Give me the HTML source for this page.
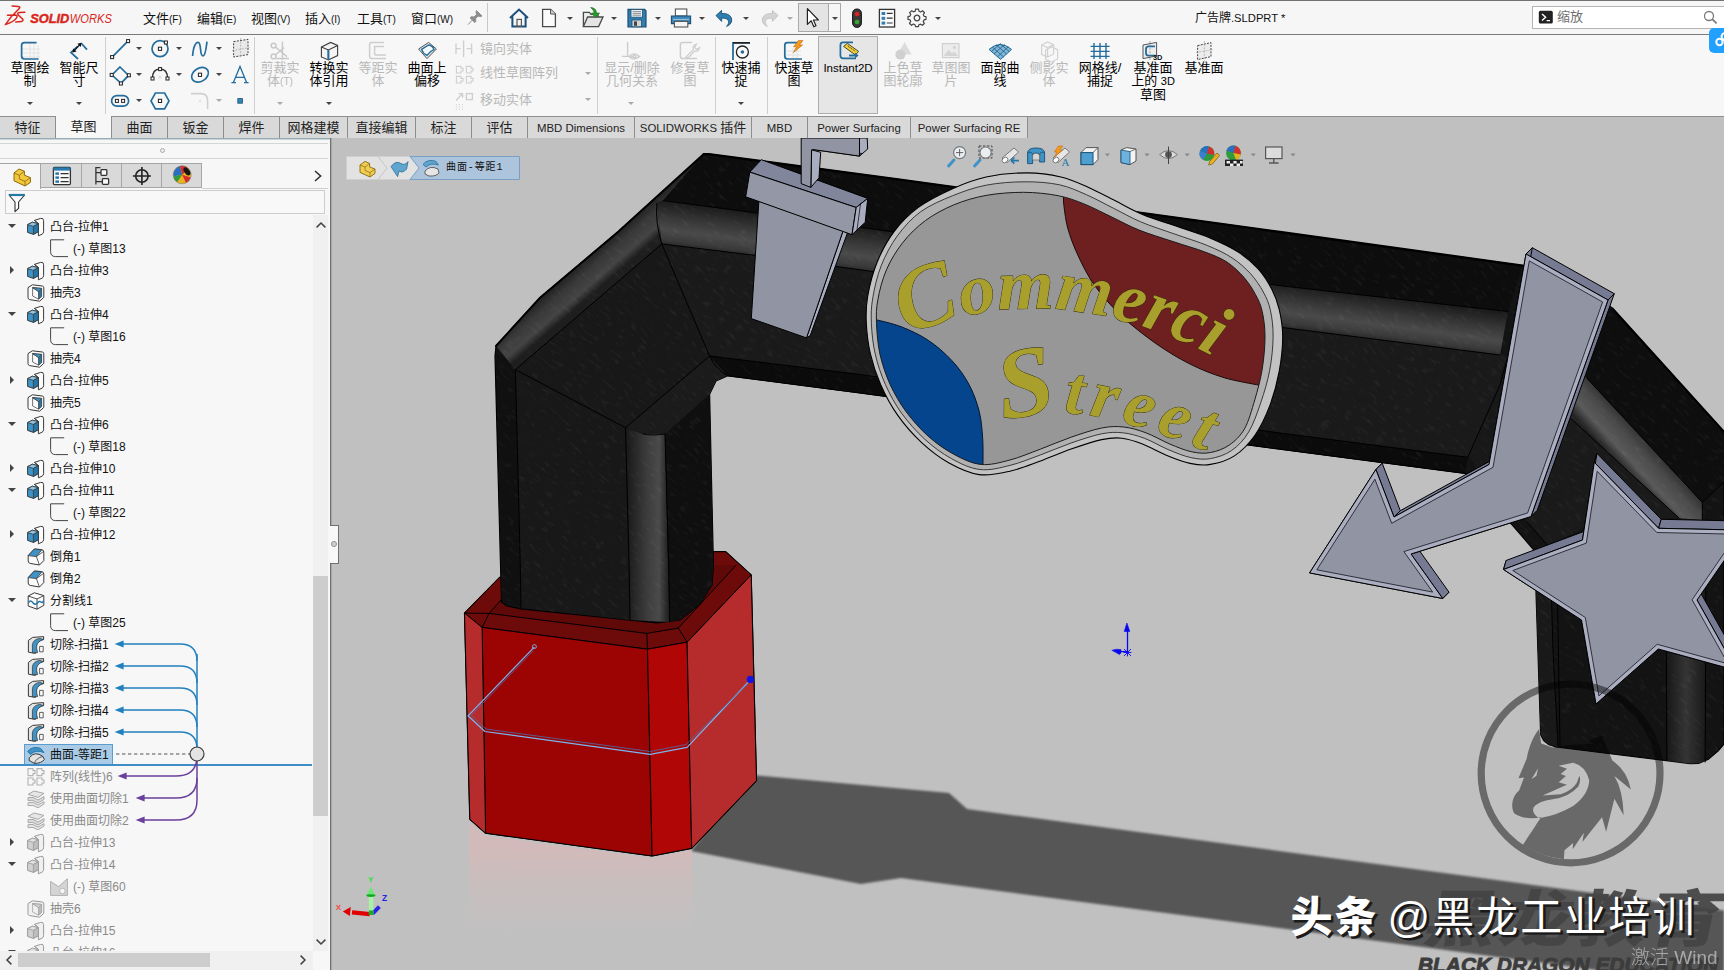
<!DOCTYPE html>
<html lang="zh-CN">
<head>
<meta charset="utf-8">
<title>SOLIDWORKS - 广告牌.SLDPRT</title>
<style>
html,body{margin:0;padding:0;}
body{width:1724px;height:970px;overflow:hidden;position:relative;background:#f6f6f6;font-family:"Liberation Sans","Noto Sans CJK SC",sans-serif;font-size:13px;color:#000;}
.abs{position:absolute;}
#title{position:absolute;left:0;top:0;width:1724px;height:35px;background:#f6f6f6;border-top:1px solid #727272;border-bottom:1px solid #7a7a7a;box-sizing:border-box;}
#ribbon{position:absolute;left:0;top:35px;width:1724px;height:81px;background:#f7f7f7;}
#tabs{position:absolute;left:0;top:116px;width:1724px;height:22px;background:#c0c0c0;border-top:1px solid #8e8e8e;box-sizing:border-box;}
.tab{position:absolute;top:0;height:22px;box-sizing:border-box;background:#d9d9d9;border-right:1px solid #8e8e8e;border-bottom:1px solid #8e8e8e;text-align:center;line-height:22px;font-size:13px;color:#222;white-space:nowrap;}
.tab.on{background:#f7f7f7;border-bottom:none;top:-1px;height:23px;border-left:1px solid #8e8e8e;}
.menu{position:absolute;top:7px;font-size:13px;white-space:nowrap;color:#111;}
.menu small{font-size:10px;}
.big{position:absolute;top:61px;width:70px;text-align:center;font-size:13px;line-height:13px;color:#000;}
.big.dis{color:#b8b8b8;}
.sm{position:absolute;font-size:13px;color:#b8b8b8;white-space:nowrap;line-height:14px;}
.vsep{position:absolute;top:37px;height:77px;width:1px;background:#cfcfcf;}
.dd{position:absolute;width:0;height:0;border-left:3px solid transparent;border-right:3px solid transparent;border-top:3px solid #444;}
.dd.g{border-top-color:#aaa;}
#left{position:absolute;left:0;top:138px;width:330px;height:832px;background:#f7f7f7;overflow:hidden;}
#view{position:absolute;left:332px;top:138px;width:1392px;height:832px;background:#c0c0c0;overflow:hidden;}
.row{position:absolute;left:50px;height:22px;line-height:22px;font-size:12px;white-space:nowrap;color:#111;}
.row.c{left:73px;}
.row.g{color:#8a8a8a;}
</style>
</head>
<body>
<div id="title">
<!-- logo -->
<svg class="abs" style="left:4px;top:4px" width="112" height="26" viewBox="0 0 112 26">
 <g fill="none" stroke="#d9261c" stroke-width="1.5" stroke-linecap="round" stroke-linejoin="round">
  <path d="M8.1 1 L14.1 1.4 Q16.4 1.8 15.5 3.2 L10 9 M3.5 10.3 L11.5 9.9 Q13.8 10.1 12.6 12.8 Q10 16.6 1.3 19.6 L8.4 10.3"/>
  <path d="M20.9 7.3 L15.2 7.6 Q13 8 14.1 9.9 L18.6 14 Q19.8 15.8 17.5 16.6 L11.8 17.1"/>
 </g>
 <text x="26.2" y="17.7" font-family="'Liberation Sans',sans-serif" font-size="12.6" font-style="italic" font-weight="bold" fill="#d9261c" stroke="#d9261c" stroke-width=".45" textLength="39" lengthAdjust="spacingAndGlyphs">SOLID</text>
 <text x="65.8" y="17.7" font-family="'Liberation Sans',sans-serif" font-size="12.6" font-style="italic" fill="#d9261c" textLength="42" lengthAdjust="spacingAndGlyphs">WORKS</text>
</svg>
<div class="menu" style="left:143px">文件<small>(F)</small></div>
<div class="menu" style="left:197px">编辑<small>(E)</small></div>
<div class="menu" style="left:251px">视图<small>(V)</small></div>
<div class="menu" style="left:305px">插入<small>(I)</small></div>
<div class="menu" style="left:357px">工具<small>(T)</small></div>
<div class="menu" style="left:411px">窗口<small>(W)</small></div>
<!-- pin -->
<svg class="abs" style="left:466px;top:8px" width="18" height="18" viewBox="0 0 18 18"><path d="M10.5 1.5 L16 7 L14.6 7.6 L12 7 L9.6 9.6 L9.8 12.6 L8.6 13.4 L4.2 9 L5 7.8 L8 8 L10.6 5.6 L10 3 Z M6.2 11.2 L2 15.6" fill="#8d8d8d" stroke="#8d8d8d" stroke-width="1"/></svg>
<div class="abs" style="left:487px;top:2px;width:1px;height:29px;background:#c8c8c8"></div>
<!-- home -->
<svg class="abs" style="left:508px;top:6px" width="22" height="22" viewBox="0 0 22 22"><path d="M2 11 L11 2.6 L20 11 M4.4 9.6 V19.4 H17.6 V9.6" fill="none" stroke="#1d4f7c" stroke-width="2"/><rect x="9" y="12.4" width="4.4" height="7" fill="none" stroke="#555" stroke-width="1.2"/></svg>
<!-- new -->
<svg class="abs" style="left:539px;top:5px" width="20" height="24" viewBox="0 0 20 24"><path d="M3.6 3.4 H11.6 L16.4 8 V20.6 H3.6 Z" fill="#fbfbfb" stroke="#4a4a4a" stroke-width="1.3"/><path d="M11.6 3.4 V8 H16.4" fill="#ddd" stroke="#4a4a4a" stroke-width="1"/></svg>
<div class="dd" style="left:567px;top:16px"></div>
<!-- open -->
<svg class="abs" style="left:581px;top:4px" width="24" height="26" viewBox="0 0 24 26"><path d="M2.4 21.6 V7.4 H8.4 L10 9.4 H17 V12" fill="#ececec" stroke="#4a4a4a" stroke-width="1.3"/><path d="M2.4 21.6 L6.6 12 H22 L17.6 21.6 Z" fill="#e4e4e4" stroke="#4a4a4a" stroke-width="1.3"/><path d="M9.6 2.6 C13 2.6 15.4 4.6 15.6 8 H18.6 L14.4 12.6 L10.4 8 H13 C12.8 5.6 11.6 4.2 9.6 2.6 Z" fill="#2a9a2a" stroke="#1c6e1c" stroke-width=".6"/></svg>
<div class="dd" style="left:611px;top:16px"></div>
<!-- save -->
<svg class="abs" style="left:626px;top:6px" width="22" height="22" viewBox="0 0 22 22"><path d="M2 2.4 H18.6 L20 3.8 V19.8 H2 Z" fill="#2f7eb0" stroke="#1b4f74" stroke-width="1.2"/><rect x="5" y="2.6" width="11.6" height="7.6" fill="#e9eef2" stroke="#1b4f74" stroke-width=".8"/><path d="M6.6 4.6 H15 M6.6 6.4 H15 M6.6 8.2 H15" stroke="#777" stroke-width=".8"/><rect x="6" y="13" width="9.6" height="6.8" fill="#d5d5d5" stroke="#1b4f74" stroke-width=".8"/><rect x="8" y="14.4" width="3" height="4.4" fill="#444"/></svg>
<div class="dd" style="left:655px;top:16px"></div>
<!-- print -->
<svg class="abs" style="left:669px;top:5px" width="24" height="24" viewBox="0 0 24 24"><rect x="6.4" y="3" width="11.4" height="7" fill="#fff" stroke="#555" stroke-width="1.1"/><path d="M2.4 10 H21.6 V17.6 H2.4 Z" fill="#3b86b8" stroke="#1b4f74" stroke-width="1.1"/><rect x="5.4" y="15.4" width="13.4" height="5.6" fill="#f4f4f4" stroke="#555" stroke-width="1.1"/><path d="M4 13.4 H20" stroke="#9fc7e2" stroke-width="1"/></svg>
<div class="dd" style="left:699px;top:16px"></div>
<!-- undo -->
<svg class="abs" style="left:714px;top:6px" width="22" height="22" viewBox="0 0 22 22"><path d="M2 8.6 L7.6 3.4 V6.6 C13.6 6 18.4 9 17.6 14 C17.2 16.6 15.4 18.4 12.6 19.4 C15 16.6 15.2 14 13.4 12.4 C12 11.2 10 11 7.6 11.2 V14.4 Z" fill="#2f7eb0" stroke="#1b4f74" stroke-width=".9"/></svg>
<div class="dd" style="left:743px;top:16px"></div>
<!-- redo disabled -->
<svg class="abs" style="left:758px;top:6px" width="22" height="22" viewBox="0 0 22 22"><path d="M20 8.6 L14.4 3.4 V6.6 C8.4 6 3.6 9 4.4 14 C4.8 16.6 6.6 18.4 9.4 19.4 C7 16.6 6.8 14 8.6 12.4 C10 11.2 12 11 14.4 11.2 V14.4 Z" fill="#d4d4d4" stroke="#c2c2c2" stroke-width=".9"/></svg>
<div class="dd g" style="left:787px;top:16px"></div>
<!-- select box -->
<div class="abs" style="left:798px;top:2px;width:43px;height:29px;border:1px solid #a9a9a9;box-sizing:border-box;background:#f6f6f6"><div class="abs" style="left:0;top:0;width:29px;height:27px;background:#e4e4e4;border-right:1px solid #a9a9a9"></div></div>
<svg class="abs" style="left:804px;top:6px" width="18" height="22" viewBox="0 0 18 22"><path d="M3.4 1.6 V17.4 L7.2 13.8 L9.8 19.8 L12 18.8 L9.4 13 H14.4 Z" fill="#fff" stroke="#222" stroke-width="1.2" stroke-linejoin="round"/></svg>
<div class="dd" style="left:832px;top:16px"></div>
<!-- traffic light -->
<svg class="abs" style="left:849px;top:6px" width="16" height="22" viewBox="0 0 16 22"><rect x="3.6" y="2" width="8.8" height="18.4" rx="4.2" fill="#3a3a3a" stroke="#111" stroke-width="1"/><circle cx="8" cy="7" r="2.3" fill="#e02020"/><circle cx="8" cy="15" r="2.3" fill="#2faa2f"/></svg>
<!-- options list -->
<svg class="abs" style="left:877px;top:6px" width="20" height="22" viewBox="0 0 20 22"><rect x="2.4" y="2.4" width="15.2" height="17.6" fill="#fafafa" stroke="#333" stroke-width="1.3"/><g fill="#2f7eb0"><rect x="4.6" y="5" width="3.6" height="3"/><rect x="4.6" y="9.8" width="3.6" height="3"/><rect x="4.6" y="14.6" width="3.6" height="3"/></g><path d="M9.8 6.4 H15.6 M9.8 11.2 H15.6 M9.8 16 H15.6" stroke="#333" stroke-width="1.2"/></svg>
<!-- gear -->
<svg class="abs" style="left:906px;top:6px" width="22" height="22" viewBox="0 0 22 22"><g transform="translate(11 11)" fill="none" stroke="#444" stroke-width="1.3" stroke-linejoin="round"><path d="M-1.6 -8.6 H1.6 L2.2 -6.2 L4 -5.4 L6 -6.8 L8.2 -4.6 L6.8 -2.6 L7.6 -0.8 L9.8 -0.4 V2.6 L7.6 3.2 L6.8 5 L8 7 L5.8 9 L3.8 7.8 L2 8.4 L1.6 10.4 H-1.6 L-2.2 8.4 L-4 7.6 L-6 9 L-8.2 6.8 L-6.8 4.8 L-7.6 3 L-9.8 2.6 V-0.4 L-7.6 -1 L-6.8 -2.8 L-8 -4.8 L-5.8 -6.8 L-3.8 -5.6 L-2 -6.2 Z" transform="translate(0 -1) scale(.92)"/><circle cx="0" cy="0" r="2.8"/></g></svg>
<div class="dd" style="left:935px;top:16px"></div>
<!-- doc title -->
<div class="abs" style="left:1195px;top:7px;font-size:12px;white-space:nowrap;color:#111">广告牌<span style="font-size:11.2px">.SLDPRT *</span></div>
<!-- search -->
<div class="abs" style="left:1532px;top:5px;width:200px;height:23px;border:1px solid #b4b4b4;box-sizing:border-box;background:#fff"></div>
<svg class="abs" style="left:1538px;top:9px" width="16" height="15" viewBox="0 0 16 15"><rect x=".8" y=".8" width="14" height="12.8" rx="1.6" fill="#222"/><path d="M4 4 L7.6 7.2 L4 10.4 M8.6 10.6 H12" fill="none" stroke="#fff" stroke-width="1.4"/></svg>
<div class="abs" style="left:1557px;top:5px;font-size:13px;color:#707070">缩放</div>
<svg class="abs" style="left:1702px;top:8px" width="18" height="18" viewBox="0 0 18 18"><circle cx="7" cy="7" r="4.5" fill="none" stroke="#7a7a7a" stroke-width="1.3"/><path d="M10.2 10.2 L14.6 14.4" stroke="#7a7a7a" stroke-width="1.8"/></svg>
</div>
<!-- blue floating button -->
<div class="abs" style="left:1709px;top:28px;width:20px;height:25px;border-radius:5px;background:#22a0ff;z-index:5"></div>
<svg class="abs" style="left:1711px;top:31px;z-index:6" width="14" height="20" viewBox="0 0 14 20"><circle cx="8.5" cy="11" r="3.2" fill="none" stroke="#fff" stroke-width="2"/><circle cx="14" cy="5.6" r="3.4" fill="none" stroke="#fff" stroke-width="2"/></svg>

<div id="ribbon"></div>
<div class="vsep" style="left:105px"></div>
<div class="vsep" style="left:254px"></div>
<div class="vsep" style="left:597px"></div>
<div class="vsep" style="left:715px"></div>
<div class="vsep" style="left:767px"></div>
<!-- Instant2D pressed button -->
<div class="abs" style="left:818px;top:36px;width:60px;height:78px;box-sizing:border-box;border:1px solid #adadad;background:#e6e6e6"></div>

<div class="big" style="left:-5px">草图绘<br>制</div>
<div class="big" style="left:44px">智能尺<br>寸</div>
<div class="big dis" style="left:245px">剪裁实<br>体<span style="font-size:10px">(T)</span></div>
<div class="big" style="left:294px">转换实<br>体引用</div>
<div class="big dis" style="left:343px">等距实<br>体</div>
<div class="big" style="left:392px">曲面上<br>偏移</div>
<div class="big dis" style="left:597px">显示/删除<br>几何关系</div>
<div class="big dis" style="left:655px">修复草<br>图</div>
<div class="big" style="left:706px">快速捕<br>捉</div>
<div class="big" style="left:759px">快速草<br>图</div>
<div class="big" style="left:813px;font-size:11.5px;top:62px">Instant2D</div>
<div class="big dis" style="left:868px">上色草<br>图轮廓</div>
<div class="big dis" style="left:916px">草图图<br>片</div>
<div class="big" style="left:965px">面部曲<br>线</div>
<div class="big dis" style="left:1014px">侧影实<br>体</div>
<div class="big" style="left:1065px">网格线/<br>捕捉</div>
<div class="big" style="left:1118px">基准面<br>上的 <span style="font-size:11px">3D</span><br>草图</div>
<div class="big" style="left:1169px">基准面</div>

<div class="dd" style="left:27px;top:102px"></div>
<div class="dd" style="left:76px;top:102px"></div>
<div class="dd g" style="left:277px;top:102px"></div>
<div class="dd" style="left:326px;top:102px"></div>
<div class="dd g" style="left:628px;top:102px"></div>
<div class="dd" style="left:738px;top:102px"></div>

<!-- big icons -->
<svg class="abs" style="left:0;top:36px" width="1230" height="26" viewBox="0 36 1230 26">
 <!-- 草图绘制 -->
 <g><path d="M30 43 V59 M34 43 V59 M38 45 V59 M22 49 H40 M22 53 H40 M22 57 H40" stroke="#e3e3e3" stroke-width="1"/><path d="M36.6 42.6 H24.4 Q21.6 42.6 21.6 45.4 V56 Q21.6 59 24.6 59 H38.6" fill="none" stroke="#236c9b" stroke-width="1.7"/></g>
 <!-- 智能尺寸 -->
 <g><path d="M81 43 L87 49.6 M77.6 46.4 L71 52.6 L78 59" fill="none" stroke="#236c9b" stroke-width="1.8"/><path d="M73.6 51.4 L80.4 44" stroke="#111" stroke-width="1.2"/><path d="M72.6 52.6 L73.2 48.4 L76.6 51.6 Z M81.4 42.8 L80.8 47 L77.4 43.8 Z" fill="#111"/></g>
 <!-- 剪裁 disabled -->
 <g fill="none" stroke="#c9c9c9" stroke-width="1.5"><circle cx="273.6" cy="45.6" r="2.4"/><circle cx="273.6" cy="56.4" r="2.4"/><path d="M275.4 47 L287 56.6 M275.4 55 L284 47.6 M282.4 41.6 V60 M276 58.6 H289"/></g>
 <!-- 转换实体引用 -->
 <g><path d="M321.4 47 L330.6 42.4 L337.6 45.4 V55.6 L328.4 60 L321.4 57 Z" fill="#f4f4f4" stroke="#3c3c3c" stroke-width="1.1"/><path d="M321.4 47 L328.4 50 L337.6 45.4 M328.4 50 V60" fill="none" stroke="#3c3c3c" stroke-width="1.1"/><path d="M328.4 50 V60" stroke="#236c9b" stroke-width="2"/></g>
 <!-- 等距 disabled -->
 <g fill="none" stroke="#cdcdcd" stroke-width="1.5"><path d="M384 42.6 H371.4 Q369.6 42.6 369.6 44.4 V56 Q369.6 58.6 372 58.6 H386"/><path d="M384 46.4 H374.6 V54 Q374.6 55 375.6 55 H386"/></g>
 <!-- 曲面上偏移 -->
 <g><path d="M418.6 49 L428.6 42.4 L436.4 49 L427 58.6 Z" fill="#e6e6e6" stroke="#555" stroke-width="1"/><path d="M421.6 49.4 L428.6 45 Q433 46 434 49.6 Q430 51 427 55.4 Q423 53.6 421.6 49.4 Z" fill="#f6fbff" stroke="#236c9b" stroke-width="1.4"/></g>
 <!-- 显示/删除几何关系 disabled -->
 <g fill="none" stroke="#cdcdcd" stroke-width="1.4"><path d="M627.6 42 V56.4 M622 56.4 H633"/><path d="M629 56.4 Q634 51.4 639.6 56.4 Q634 61 629 56.4 Z"/><circle cx="634.4" cy="56.4" r="1.3"/></g>
 <!-- 修复草图 disabled -->
 <g fill="none" stroke="#cdcdcd" stroke-width="1.5"><path d="M692 42.6 H682.4 Q680.4 42.6 680.4 44.6 V56 Q680.4 58.6 683 58.6 H697"/><path d="M686 57 L693.4 49.6 Q692 45.6 696.4 44 L694.6 47.4 L696.6 49.4 L699.6 47.6 Q698.6 52 694.8 51 L687.6 58.4 Z" stroke-width="1.2"/></g>
 <!-- 快速捕捉 -->
 <g fill="none"><path d="M733 60 V42.8 H750" stroke="#236c9b" stroke-width="1.8"/><path d="M733 42.8 H750" stroke="#222" stroke-width="1.6"/><circle cx="742.4" cy="52" r="6" stroke="#222" stroke-width="1.3" fill="#fafafa"/><circle cx="742.4" cy="52" r="1.8" fill="#236c9b"/></g>
 <!-- 快速草图 -->
 <g fill="none"><path d="M793 48 V59 M797 50 V59 M786 51 H801 M786 55 H801" stroke="#e0e0e0"/><path d="M798 42.6 H787.4 Q784.8 42.6 784.8 45.2 V56 Q784.8 59 787.6 59 H802" stroke="#236c9b" stroke-width="1.7"/><path d="M798.4 40.6 L803 40.6 L799.4 45 L802.6 45 L793.4 52.6 L796.6 46.8 L793.6 46.8 Z" fill="#f39a1a" stroke="#c2600a" stroke-width=".6"/></g>
 <!-- Instant2D -->
 <g fill="none"><path d="M853 42.4 H843 Q840.4 42.4 840.4 45 V55.6 Q840.4 58.4 843.2 58.4 H856" stroke="#236c9b" stroke-width="1.7"/><path d="M843.6 46.4 L847.4 43.4 L858.6 51.4 L855.4 55 Z" fill="#f3d02c" stroke="#333" stroke-width=".9"/><path d="M848 45.6 L849.4 47.6 M850.6 47.4 L852 49.4 M853.2 49.4 L854.6 51.2" stroke="#333" stroke-width=".8"/><path d="M849 54.6 H855 V52.6 L858.6 55.6 L855 58.6 V56.6 H849 Z" fill="#236c9b"/></g>
 <!-- 上色草图轮廓 disabled -->
 <g><path d="M904.6 42 L911.6 54.6 H897.6 Z" fill="#dcdcdc"/><circle cx="900.4" cy="54.6" r="5" fill="#d0d0d0"/></g>
 <!-- 草图图片 disabled -->
 <g><rect x="942.4" y="43.6" width="16.6" height="14" fill="#ececec" stroke="#d0d0d0" stroke-width="1.2"/><path d="M943.6 56 L948.6 50 L952 53.4 L954.4 51.4 L958 56 Z" fill="#d4d4d4"/><circle cx="954.4" cy="47.4" r="1.6" fill="#d4d4d4"/></g>
 <!-- 面部曲线 -->
 <g><path d="M989 49.4 Q1000 39.6 1011.6 49.4 L1000.6 59.4 Z" fill="#7fb6d6" stroke="#236c9b" stroke-width="1"/><path d="M992.4 47 L1003.6 57 M996 44.6 L1006.6 54 M1000 43.6 L1009.4 51.6 M1008.4 46.6 L997.6 56.6 M1004.6 44.4 L994 54 M1000.4 43.6 L991.4 51.6" stroke="#1d5d86" stroke-width=".8" fill="none"/></g>
 <!-- 侧影实体 disabled -->
 <g fill="none" stroke="#d2d2d2" stroke-width="1.2"><path d="M1041.6 45 L1047.6 42 L1053.6 44.6 V54 L1047.6 57 L1041.6 54.4 Z M1041.6 45 L1047.6 47.6 L1053.6 44.6 M1047.6 47.6 V57"/><path d="M1045.6 50 L1051.6 47 L1057.6 49.6 V59 L1051.6 62 L1045.6 59.4 Z"/></g>
 <!-- 网格线/捕捉 -->
 <g stroke="#236c9b" stroke-width="1.4"><path d="M1094 43 V59 M1100 43 V59 M1106 43 V59 M1090.6 46.4 H1109.6 M1090.6 51.4 H1109.6 M1090.6 56.4 H1109.6"/></g>
 <!-- 基准面上的3D草图 -->
 <g fill="none"><path d="M1143 45 L1156.6 42.4 V56 L1143 58.6 Z" fill="#ededed" stroke="#555" stroke-width="1"/><path d="M1155 46.4 H1148.6 Q1146 46.4 1146 49 V53 Q1146 55.6 1148.6 55.6 H1155.6" stroke="#236c9b" stroke-width="1.8"/><path d="M1150 41 V60" stroke="#777" stroke-width=".6" stroke-dasharray="2 1.4"/><text x="1153" y="59.6" font-family="'Liberation Sans',sans-serif" font-size="7.4" font-weight="bold" fill="#111" stroke="none">3D</text></g>
 <!-- 基准面 -->
 <g fill="#ececec" stroke="#444" stroke-width="1" stroke-dasharray="2 1.2"><path d="M1197.6 45.6 L1211 42.6 V56.6 L1197.6 59.6 Z"/><path d="M1204.4 41 V61 M1196 52.6 L1212.6 49.6" stroke="#999" stroke-width=".6"/></g>
</svg>

<!-- small sketch tool grid -->
<svg class="abs" style="left:108px;top:36px" width="146" height="80" viewBox="108 36 146 80">
 <g fill="none" stroke="#236c9b" stroke-width="1.7">
  <path d="M112.6 56.6 L127.4 41.6"/>
  <circle cx="160" cy="48.7" r="8"/>
  <path d="M192.6 56 C193.4 45 196.4 41.6 198.6 42.6 C201.6 44 199.4 56 203 56 C205.6 56 206.4 46 207 41.6"/>
  <path d="M120 67 L128.6 75.4 L121 83.4 L112 75 Z"/>
  <ellipse cx="200" cy="74.8" rx="9" ry="6.6" transform="rotate(-32 200 74.8)"/>
  <rect x="111.6" y="95.6" width="17" height="10.6" rx="5.3"/>
  <path d="M155.4 93 H164.6 L169 100.9 L164.6 108.8 H155.4 L151 100.9 Z"/>
  <path d="M233.4 82.6 L240 66.4 L246.6 82.6 M235.8 77.4 H244.2 M231.4 82.6 H236 M244 82.6 H248.6" stroke-width="1.3"/>
 </g>
 <path d="M152.4 78.6 Q152.4 69 160 69 Q167.6 69 167.6 78.6" fill="none" stroke="#333" stroke-width="1.4"/>
 <g fill="#fff" stroke="#222" stroke-width="1">
  <rect x="110.6" y="55.6" width="3" height="3"/><rect x="126.6" y="39.6" width="3" height="3"/>
  <rect x="158.4" y="47.2" width="3.2" height="3.2"/><rect x="164.4" y="41" width="3" height="3"/>
  <rect x="110.2" y="73.4" width="3" height="3"/><rect x="127.4" y="73.8" width="3" height="3"/><rect x="119.4" y="82" width="3" height="3"/>
  <rect x="151" y="77" width="3" height="3"/><rect x="166" y="77" width="3" height="3"/><rect x="158.6" y="67.6" width="3" height="3"/>
  <rect x="198.4" y="73.2" width="3.2" height="3.2"/>
  <rect x="115.4" y="99.4" width="3" height="3"/><rect x="121.6" y="99.4" width="3" height="3"/>
  <rect x="158.4" y="99.3" width="3.2" height="3.2"/>
 </g>
 <path d="M158.4 75.6 L161.6 78.8 M161.6 75.6 L158.4 78.8" stroke="#ccc" stroke-width=".8"/>
 <path d="M233.6 41.6 L248 39.4 V54.6 L233.6 57 Z" fill="#e9e9e9" stroke="#444" stroke-width="1" stroke-dasharray="2 1.3"/>
 <path d="M240.6 38 V58 M232 50.6 L249.6 47.6" stroke="#999" stroke-width=".6" stroke-dasharray="2 1.3"/>
 <path d="M191 93.6 H201 Q207.6 93.6 207.6 100.6 V109" fill="none" stroke="#d0d0d0" stroke-width="1.6"/>
 <path d="M198.6 99.6 L201.4 102.4 M201.4 99.6 L198.6 102.4" stroke="#ddd" stroke-width=".8"/>
 <rect x="237.8" y="98.6" width="4.6" height="4.6" fill="#2f86b8" stroke="#1b4f74" stroke-width=".8"/>
</svg>
<div class="dd" style="left:136px;top:47px"></div><div class="dd" style="left:136px;top:73px"></div><div class="dd" style="left:136px;top:99px"></div>
<div class="dd" style="left:176px;top:47px"></div><div class="dd" style="left:176px;top:73px"></div>
<div class="dd" style="left:216px;top:47px"></div><div class="dd" style="left:216px;top:73px"></div><div class="dd g" style="left:216px;top:99px"></div>

<!-- mirror / pattern / move (disabled) -->
<svg class="abs" style="left:452px;top:38px" width="24" height="76" viewBox="452 38 24 76" fill="none" stroke="#cfcfcf" stroke-width="1.4">
 <path d="M463.6 40.6 V57 M460.6 48.6 H456 M456 43.4 V54 M466.6 48.6 H471.6 M471.6 43.4 V54"/>
 <path d="M456.4 66.4 H461 V68.4 H463 V71 H461 V73 H456.4 Z M466.4 66.4 H471 V68.4 H473 V71 H471 V73 H466.4 Z M456.4 76.4 H461 V78.4 H463 V81 H461 V83 H456.4 Z M466.4 76.4 H471 V78.4 H473 V81 H471 V83 H466.4 Z" stroke-width="1.1"/>
 <path d="M456 100.4 L462.6 93.6 M458.4 93.6 H462.6 V97.8"/><rect x="466.4" y="93.6" width="6" height="6"/>
 <path d="M456.4 104 V111 M459.4 104 V111 M462.4 104 V111" stroke-dasharray="1 1.4" stroke-width="1"/>
</svg>
<div class="sm" style="left:480px;top:42px">镜向实体</div>
<div class="sm" style="left:480px;top:66px">线性草图阵列</div>
<div class="sm" style="left:480px;top:93px">移动实体</div>
<div class="dd g" style="left:585px;top:72px"></div>
<div class="dd g" style="left:585px;top:98px"></div>

<div id="tabs">
<div class="tab" style="left:0px;width:56px;font-size:13px">特征</div>
<div class="tab on" style="left:55px;width:57px;font-size:13px">草图</div>
<div class="tab" style="left:112px;width:56px;font-size:13px">曲面</div>
<div class="tab" style="left:168px;width:56px;font-size:13px">钣金</div>
<div class="tab" style="left:224px;width:56px;font-size:13px">焊件</div>
<div class="tab" style="left:280px;width:68px;font-size:13px">网格建模</div>
<div class="tab" style="left:348px;width:68px;font-size:13px">直接编辑</div>
<div class="tab" style="left:416px;width:56px;font-size:13px">标注</div>
<div class="tab" style="left:472px;width:56px;font-size:13px">评估</div>
<div class="tab" style="left:528px;width:107px;font-size:11.4px">MBD Dimensions</div>
<div class="tab" style="left:635px;width:117px;font-size:11.4px">SOLIDWORKS <span style="font-size:13px">插件</span></div>
<div class="tab" style="left:752px;width:56px;font-size:11.4px">MBD</div>
<div class="tab" style="left:808px;width:103px;font-size:11.4px">Power Surfacing</div>
<div class="tab" style="left:911px;width:117px;font-size:11.4px">Power Surfacing RE</div>
</div>

<div id="left">
<div class="abs" style="left:0;top:0;width:330px;height:2px;background:linear-gradient(#7f979c,#dfeaec)"></div>
<div class="abs" style="left:0;top:5px;width:328px;height:1px;background:#d6d6d6"></div>
<div class="abs" style="left:0;top:20px;width:328px;height:1px;background:#d6d6d6"></div>
<div class="abs" style="left:160px;top:10px;width:5px;height:5px;border-radius:50%;border:1px solid #aaa;box-sizing:border-box;background:#eee"></div>
<div class="abs" style="left:0;top:25px;width:202px;height:25px;box-sizing:border-box;background:#d9d9d9;border:1px solid #a6a6a6;border-left:none"></div>
<div class="abs" style="left:0;top:25px;width:41px;height:26px;background:#f7f7f7;border-top:1px solid #a6a6a6;border-right:1px solid #a6a6a6;box-sizing:border-box"></div>
<div class="abs" style="left:81px;top:26px;width:1px;height:24px;background:#a6a6a6"></div>
<div class="abs" style="left:121px;top:26px;width:1px;height:24px;background:#a6a6a6"></div>
<div class="abs" style="left:161px;top:26px;width:1px;height:24px;background:#a6a6a6"></div>
<div class="abs" style="left:202px;top:50px;width:126px;height:1px;background:#cfcfcf"></div>
<svg class="abs" style="left:0;top:26px" width="202" height="24" viewBox="0 0 202 24"><path d="M14 9 L19 5 L24.4 7.2 V11.2 L30.4 13.6 V18.4 L25 22 L14 16.8 Z" fill="#f3c63c" stroke="#8a6a10" stroke-width="1"/><path d="M14 9 L19.4 11.2 L24.4 7.2 M19.4 11.2 V15 L25 17.4 L30.4 13.6 M25 17.4 V22" fill="none" stroke="#8a6a10" stroke-width=".8"/><rect x="53.4" y="3.4" width="17" height="17.2" rx="1" fill="#fafafa" stroke="#333" stroke-width="1.3"/><rect x="53.4" y="3.4" width="17" height="3.2" fill="#2a7ab0"/><g fill="#2676a8"><rect x="55.4" y="8.4" width="3.6" height="2.4"/><rect x="55.4" y="12.4" width="3.6" height="2.4"/><rect x="55.4" y="16.4" width="3.6" height="2.4"/></g><path d="M60.6 9.6 H68.6 M60.6 13.6 H68.6 M60.6 17.6 H68.6" stroke="#333" stroke-width="1.2"/><g fill="#fafafa" stroke="#333" stroke-width="1.3"><path d="M95.9 3 V20.6 M95.9 3.6 H100.4 M95.9 8.6 H101 M95.9 17.6 H102.4" fill="none"/><rect x="101" y="5.6" width="5.8" height="5.8" rx=".8"/><rect x="102.4" y="14.6" width="6.2" height="5.8" rx=".8"/></g><g fill="none" stroke="#222" stroke-width="1.6"><circle cx="141.9" cy="12" r="6.2"/><path d="M141.9 3 V21 M132.9 12 H150.9"/></g><circle cx="182.2" cy="10.8" r="9" fill="#e8b21c"/><path d="M182.2 10.8 L173.4 12.4 A9 9 0 0 1 180 2.1 Z" fill="#2a6fc0"/><path d="M182.2 10.8 L180 2.1 A9 9 0 0 1 188.6 4.4 Z" fill="#d62c2c"/><path d="M182.2 10.8 L190.8 13.4 A9 9 0 0 1 186 19 Z" fill="#d62c2c"/><path d="M182.2 10.8 L173.4 12.4 A9 9 0 0 0 177 18.2 Z" fill="#2e9c3c"/><ellipse cx="187" cy="7.4" rx="2.6" ry="4.6" transform="rotate(-38 187 7.4)" fill="#161616"/><circle cx="182.2" cy="10.8" r="9" fill="none" stroke="#7a7a7a" stroke-width=".6"/></svg>
<svg class="abs" style="left:312px;top:31px" width="12" height="14" viewBox="0 0 12 14"><path d="M3 2 L8.6 7 L3 12" fill="none" stroke="#333" stroke-width="1.6"/></svg>
<div class="abs" style="left:5px;top:52px;width:320px;height:24px;box-sizing:border-box;border:1px solid #cdcdcd;background:#f8f8f8"></div>
<svg class="abs" style="left:7px;top:54px" width="20" height="22" viewBox="0 0 20 22"><path d="M2 3 H17.6 L11.6 10 V16.4 L8 19.6 V10 Z" fill="#fdfdfd" stroke="#333" stroke-width="1.1" stroke-linejoin="round"/><path d="M2 3 H17.6" stroke="#2676a8" stroke-width="2.2"/></svg>
<div class="abs" style="left:24px;top:606px;width:89px;height:21px;box-sizing:border-box;background:#a9cbe6;border:1px solid #5a9bd0"></div>
<div class="abs" style="left:0;top:626px;width:312px;height:2px;background:#3f8fc6"></div>
<div class="abs" style="left:8px;top:86px;width:0;height:0;border-left:4px solid transparent;border-right:4px solid transparent;border-top:4px solid #444"></div>
<svg class="abs" style="left:26px;top:79px" width="20" height="20" viewBox="0 0 20 20"><path d="M8.4 3.4 L14.6 1.4 Q17.6 .8 17.6 3.6 V14.6 Q17.6 16.4 16 17.2 L12.4 18.8 V6.6 Z" fill="#fbfbfb" stroke="#3a3a3a" stroke-width="1"/><path d="M8.4 3.4 L12.4 6.6" stroke="#3a3a3a" stroke-width="1"/><path d="M1.6 7.6 L6.4 5.2 L12.4 6.8 V14.6 L7.4 17.4 L1.6 15.4 Z" fill="#3f93c6" stroke="#3a3a3a" stroke-width="1"/><path d="M1.6 7.6 L7.4 9.4 L12.4 6.8 L6.4 5.2 Z" fill="#8cc4e4" stroke="#3a3a3a" stroke-width=".8"/><path d="M7.4 9.4 V17.4 L12.4 14.6 V6.8 Z" fill="#2676a8" stroke="#3a3a3a" stroke-width=".8"/></svg>
<div class="row" style="top:78px">凸台-拉伸1</div>
<svg class="abs" style="left:49px;top:101px" width="20" height="20" viewBox="0 0 20 20"><path d="M15.2 .8 H1.6 V12.6 Q1.6 17.6 6.6 17.6 H19" fill="none" stroke="#444" stroke-width="1"/></svg>
<div class="row c" style="top:100px">(-) 草图13</div>
<div class="abs" style="left:10px;top:128px;width:0;height:0;border-top:4px solid transparent;border-bottom:4px solid transparent;border-left:4px solid #444"></div>
<svg class="abs" style="left:26px;top:123px" width="20" height="20" viewBox="0 0 20 20"><path d="M8.4 3.4 L14.6 1.4 Q17.6 .8 17.6 3.6 V14.6 Q17.6 16.4 16 17.2 L12.4 18.8 V6.6 Z" fill="#fbfbfb" stroke="#3a3a3a" stroke-width="1"/><path d="M8.4 3.4 L12.4 6.6" stroke="#3a3a3a" stroke-width="1"/><path d="M1.6 7.6 L6.4 5.2 L12.4 6.8 V14.6 L7.4 17.4 L1.6 15.4 Z" fill="#3f93c6" stroke="#3a3a3a" stroke-width="1"/><path d="M1.6 7.6 L7.4 9.4 L12.4 6.8 L6.4 5.2 Z" fill="#8cc4e4" stroke="#3a3a3a" stroke-width=".8"/><path d="M7.4 9.4 V17.4 L12.4 14.6 V6.8 Z" fill="#2676a8" stroke="#3a3a3a" stroke-width=".8"/></svg>
<div class="row" style="top:122px">凸台-拉伸3</div>
<svg class="abs" style="left:26px;top:145px" width="20" height="20" viewBox="0 0 20 20"><path d="M2 4.6 L6.4 1.8 L16.4 3 Q17.8 3.2 17.8 4.8 V14.4 L13.6 18.2 L3.6 16.6 Q2 16.2 2 14.6 Z" fill="#fbfbfb" stroke="#3a3a3a" stroke-width="1"/><path d="M6.6 4.6 L15.6 5.4 V13.6 L12.6 16.2 V8.6 Z" fill="#2676a8" stroke="#3a3a3a" stroke-width=".8"/><path d="M6.6 4.6 L12.6 8.6 L15.6 5.4 Z" fill="#3f93c6" stroke="#3a3a3a" stroke-width=".6"/><path d="M6.6 4.6 V13 L12.6 16.2" fill="none" stroke="#3a3a3a" stroke-width=".7"/></svg>
<div class="row" style="top:144px">抽壳3</div>
<div class="abs" style="left:8px;top:174px;width:0;height:0;border-left:4px solid transparent;border-right:4px solid transparent;border-top:4px solid #444"></div>
<svg class="abs" style="left:26px;top:167px" width="20" height="20" viewBox="0 0 20 20"><path d="M8.4 3.4 L14.6 1.4 Q17.6 .8 17.6 3.6 V14.6 Q17.6 16.4 16 17.2 L12.4 18.8 V6.6 Z" fill="#fbfbfb" stroke="#3a3a3a" stroke-width="1"/><path d="M8.4 3.4 L12.4 6.6" stroke="#3a3a3a" stroke-width="1"/><path d="M1.6 7.6 L6.4 5.2 L12.4 6.8 V14.6 L7.4 17.4 L1.6 15.4 Z" fill="#3f93c6" stroke="#3a3a3a" stroke-width="1"/><path d="M1.6 7.6 L7.4 9.4 L12.4 6.8 L6.4 5.2 Z" fill="#8cc4e4" stroke="#3a3a3a" stroke-width=".8"/><path d="M7.4 9.4 V17.4 L12.4 14.6 V6.8 Z" fill="#2676a8" stroke="#3a3a3a" stroke-width=".8"/></svg>
<div class="row" style="top:166px">凸台-拉伸4</div>
<svg class="abs" style="left:49px;top:189px" width="20" height="20" viewBox="0 0 20 20"><path d="M15.2 .8 H1.6 V12.6 Q1.6 17.6 6.6 17.6 H19" fill="none" stroke="#444" stroke-width="1"/></svg>
<div class="row c" style="top:188px">(-) 草图16</div>
<svg class="abs" style="left:26px;top:211px" width="20" height="20" viewBox="0 0 20 20"><path d="M2 4.6 L6.4 1.8 L16.4 3 Q17.8 3.2 17.8 4.8 V14.4 L13.6 18.2 L3.6 16.6 Q2 16.2 2 14.6 Z" fill="#fbfbfb" stroke="#3a3a3a" stroke-width="1"/><path d="M6.6 4.6 L15.6 5.4 V13.6 L12.6 16.2 V8.6 Z" fill="#2676a8" stroke="#3a3a3a" stroke-width=".8"/><path d="M6.6 4.6 L12.6 8.6 L15.6 5.4 Z" fill="#3f93c6" stroke="#3a3a3a" stroke-width=".6"/><path d="M6.6 4.6 V13 L12.6 16.2" fill="none" stroke="#3a3a3a" stroke-width=".7"/></svg>
<div class="row" style="top:210px">抽壳4</div>
<div class="abs" style="left:10px;top:238px;width:0;height:0;border-top:4px solid transparent;border-bottom:4px solid transparent;border-left:4px solid #444"></div>
<svg class="abs" style="left:26px;top:233px" width="20" height="20" viewBox="0 0 20 20"><path d="M8.4 3.4 L14.6 1.4 Q17.6 .8 17.6 3.6 V14.6 Q17.6 16.4 16 17.2 L12.4 18.8 V6.6 Z" fill="#fbfbfb" stroke="#3a3a3a" stroke-width="1"/><path d="M8.4 3.4 L12.4 6.6" stroke="#3a3a3a" stroke-width="1"/><path d="M1.6 7.6 L6.4 5.2 L12.4 6.8 V14.6 L7.4 17.4 L1.6 15.4 Z" fill="#3f93c6" stroke="#3a3a3a" stroke-width="1"/><path d="M1.6 7.6 L7.4 9.4 L12.4 6.8 L6.4 5.2 Z" fill="#8cc4e4" stroke="#3a3a3a" stroke-width=".8"/><path d="M7.4 9.4 V17.4 L12.4 14.6 V6.8 Z" fill="#2676a8" stroke="#3a3a3a" stroke-width=".8"/></svg>
<div class="row" style="top:232px">凸台-拉伸5</div>
<svg class="abs" style="left:26px;top:255px" width="20" height="20" viewBox="0 0 20 20"><path d="M2 4.6 L6.4 1.8 L16.4 3 Q17.8 3.2 17.8 4.8 V14.4 L13.6 18.2 L3.6 16.6 Q2 16.2 2 14.6 Z" fill="#fbfbfb" stroke="#3a3a3a" stroke-width="1"/><path d="M6.6 4.6 L15.6 5.4 V13.6 L12.6 16.2 V8.6 Z" fill="#2676a8" stroke="#3a3a3a" stroke-width=".8"/><path d="M6.6 4.6 L12.6 8.6 L15.6 5.4 Z" fill="#3f93c6" stroke="#3a3a3a" stroke-width=".6"/><path d="M6.6 4.6 V13 L12.6 16.2" fill="none" stroke="#3a3a3a" stroke-width=".7"/></svg>
<div class="row" style="top:254px">抽壳5</div>
<div class="abs" style="left:8px;top:284px;width:0;height:0;border-left:4px solid transparent;border-right:4px solid transparent;border-top:4px solid #444"></div>
<svg class="abs" style="left:26px;top:277px" width="20" height="20" viewBox="0 0 20 20"><path d="M8.4 3.4 L14.6 1.4 Q17.6 .8 17.6 3.6 V14.6 Q17.6 16.4 16 17.2 L12.4 18.8 V6.6 Z" fill="#fbfbfb" stroke="#3a3a3a" stroke-width="1"/><path d="M8.4 3.4 L12.4 6.6" stroke="#3a3a3a" stroke-width="1"/><path d="M1.6 7.6 L6.4 5.2 L12.4 6.8 V14.6 L7.4 17.4 L1.6 15.4 Z" fill="#3f93c6" stroke="#3a3a3a" stroke-width="1"/><path d="M1.6 7.6 L7.4 9.4 L12.4 6.8 L6.4 5.2 Z" fill="#8cc4e4" stroke="#3a3a3a" stroke-width=".8"/><path d="M7.4 9.4 V17.4 L12.4 14.6 V6.8 Z" fill="#2676a8" stroke="#3a3a3a" stroke-width=".8"/></svg>
<div class="row" style="top:276px">凸台-拉伸6</div>
<svg class="abs" style="left:49px;top:299px" width="20" height="20" viewBox="0 0 20 20"><path d="M15.2 .8 H1.6 V12.6 Q1.6 17.6 6.6 17.6 H19" fill="none" stroke="#444" stroke-width="1"/></svg>
<div class="row c" style="top:298px">(-) 草图18</div>
<div class="abs" style="left:10px;top:326px;width:0;height:0;border-top:4px solid transparent;border-bottom:4px solid transparent;border-left:4px solid #444"></div>
<svg class="abs" style="left:26px;top:321px" width="20" height="20" viewBox="0 0 20 20"><path d="M8.4 3.4 L14.6 1.4 Q17.6 .8 17.6 3.6 V14.6 Q17.6 16.4 16 17.2 L12.4 18.8 V6.6 Z" fill="#fbfbfb" stroke="#3a3a3a" stroke-width="1"/><path d="M8.4 3.4 L12.4 6.6" stroke="#3a3a3a" stroke-width="1"/><path d="M1.6 7.6 L6.4 5.2 L12.4 6.8 V14.6 L7.4 17.4 L1.6 15.4 Z" fill="#3f93c6" stroke="#3a3a3a" stroke-width="1"/><path d="M1.6 7.6 L7.4 9.4 L12.4 6.8 L6.4 5.2 Z" fill="#8cc4e4" stroke="#3a3a3a" stroke-width=".8"/><path d="M7.4 9.4 V17.4 L12.4 14.6 V6.8 Z" fill="#2676a8" stroke="#3a3a3a" stroke-width=".8"/></svg>
<div class="row" style="top:320px">凸台-拉伸10</div>
<div class="abs" style="left:8px;top:350px;width:0;height:0;border-left:4px solid transparent;border-right:4px solid transparent;border-top:4px solid #444"></div>
<svg class="abs" style="left:26px;top:343px" width="20" height="20" viewBox="0 0 20 20"><path d="M8.4 3.4 L14.6 1.4 Q17.6 .8 17.6 3.6 V14.6 Q17.6 16.4 16 17.2 L12.4 18.8 V6.6 Z" fill="#fbfbfb" stroke="#3a3a3a" stroke-width="1"/><path d="M8.4 3.4 L12.4 6.6" stroke="#3a3a3a" stroke-width="1"/><path d="M1.6 7.6 L6.4 5.2 L12.4 6.8 V14.6 L7.4 17.4 L1.6 15.4 Z" fill="#3f93c6" stroke="#3a3a3a" stroke-width="1"/><path d="M1.6 7.6 L7.4 9.4 L12.4 6.8 L6.4 5.2 Z" fill="#8cc4e4" stroke="#3a3a3a" stroke-width=".8"/><path d="M7.4 9.4 V17.4 L12.4 14.6 V6.8 Z" fill="#2676a8" stroke="#3a3a3a" stroke-width=".8"/></svg>
<div class="row" style="top:342px">凸台-拉伸11</div>
<svg class="abs" style="left:49px;top:365px" width="20" height="20" viewBox="0 0 20 20"><path d="M15.2 .8 H1.6 V12.6 Q1.6 17.6 6.6 17.6 H19" fill="none" stroke="#444" stroke-width="1"/></svg>
<div class="row c" style="top:364px">(-) 草图22</div>
<div class="abs" style="left:10px;top:392px;width:0;height:0;border-top:4px solid transparent;border-bottom:4px solid transparent;border-left:4px solid #444"></div>
<svg class="abs" style="left:26px;top:387px" width="20" height="20" viewBox="0 0 20 20"><path d="M8.4 3.4 L14.6 1.4 Q17.6 .8 17.6 3.6 V14.6 Q17.6 16.4 16 17.2 L12.4 18.8 V6.6 Z" fill="#fbfbfb" stroke="#3a3a3a" stroke-width="1"/><path d="M8.4 3.4 L12.4 6.6" stroke="#3a3a3a" stroke-width="1"/><path d="M1.6 7.6 L6.4 5.2 L12.4 6.8 V14.6 L7.4 17.4 L1.6 15.4 Z" fill="#3f93c6" stroke="#3a3a3a" stroke-width="1"/><path d="M1.6 7.6 L7.4 9.4 L12.4 6.8 L6.4 5.2 Z" fill="#8cc4e4" stroke="#3a3a3a" stroke-width=".8"/><path d="M7.4 9.4 V17.4 L12.4 14.6 V6.8 Z" fill="#2676a8" stroke="#3a3a3a" stroke-width=".8"/></svg>
<div class="row" style="top:386px">凸台-拉伸12</div>
<svg class="abs" style="left:26px;top:409px" width="20" height="20" viewBox="0 0 20 20"><path d="M2.2 8.6 L8.4 2 L15.6 2.6 Q17.8 2.8 17.8 5 V13.6 L13.4 18 L4.2 16.4 Q2.2 16 2.2 14 Z" fill="#fbfbfb" stroke="#3a3a3a" stroke-width="1"/><path d="M2.2 8.6 L8.4 2 L15.8 2.8 L10.4 9.6 Z" fill="#3f93c6" stroke="#3a3a3a" stroke-width=".8"/><path d="M10.4 9.6 L13.4 18 M10.4 9.6 L17.6 4.4" fill="none" stroke="#3a3a3a" stroke-width=".8"/></svg>
<div class="row" style="top:408px">倒角1</div>
<svg class="abs" style="left:26px;top:431px" width="20" height="20" viewBox="0 0 20 20"><path d="M2.2 8.6 L8.4 2 L15.6 2.6 Q17.8 2.8 17.8 5 V13.6 L13.4 18 L4.2 16.4 Q2.2 16 2.2 14 Z" fill="#fbfbfb" stroke="#3a3a3a" stroke-width="1"/><path d="M2.2 8.6 L8.4 2 L15.8 2.8 L10.4 9.6 Z" fill="#3f93c6" stroke="#3a3a3a" stroke-width=".8"/><path d="M10.4 9.6 L13.4 18 M10.4 9.6 L17.6 4.4" fill="none" stroke="#3a3a3a" stroke-width=".8"/></svg>
<div class="row" style="top:430px">倒角2</div>
<div class="abs" style="left:8px;top:460px;width:0;height:0;border-left:4px solid transparent;border-right:4px solid transparent;border-top:4px solid #444"></div>
<svg class="abs" style="left:26px;top:453px" width="20" height="20" viewBox="0 0 20 20"><path d="M2.2 5 L8.4 1.8 L17.8 4.6 V14.4 L11 18.2 L2.2 15 Z" fill="#fbfbfb" stroke="#3a3a3a" stroke-width="1"/><path d="M2.2 5 L11 8 L17.8 4.6 M11 8 V18.2" fill="none" stroke="#3a3a3a" stroke-width=".9"/><path d="M2.6 11.6 Q4.6 8.6 6.6 11.4 Q8.8 14.4 11 12.4 Q13.4 9.4 15 11 Q16.6 12.4 17.6 9.8" fill="none" stroke="#2676a8" stroke-width="1.6"/></svg>
<div class="row" style="top:452px">分割线1</div>
<svg class="abs" style="left:49px;top:475px" width="20" height="20" viewBox="0 0 20 20"><path d="M15.2 .8 H1.6 V12.6 Q1.6 17.6 6.6 17.6 H19" fill="none" stroke="#444" stroke-width="1"/></svg>
<div class="row c" style="top:474px">(-) 草图25</div>
<svg class="abs" style="left:26px;top:497px" width="20" height="20" viewBox="0 0 20 20"><path d="M2.4 5.4 L6.6 2.4 L17.6 1.6 V4.4 Q11.4 5 9.6 10.6 L9.4 18.4 L2.4 17.2 Z" fill="#e4e4e4" stroke="#3a3a3a" stroke-width="1"/><path d="M6.4 17.8 V9.6 Q7.4 4.2 13.8 3.4 L17.6 4.6 Q11.8 6 10.6 11 Q10.4 14 11.6 17.6 Z" fill="#3f93c6" stroke="#3a3a3a" stroke-width=".8"/><path d="M13.6 11.4 H17.2 V16.8 H13.6 Z" fill="#fbfbfb" stroke="#3a3a3a" stroke-width=".8"/></svg>
<div class="row" style="top:496px">切除-扫描1</div>
<svg class="abs" style="left:26px;top:519px" width="20" height="20" viewBox="0 0 20 20"><path d="M2.4 5.4 L6.6 2.4 L17.6 1.6 V4.4 Q11.4 5 9.6 10.6 L9.4 18.4 L2.4 17.2 Z" fill="#e4e4e4" stroke="#3a3a3a" stroke-width="1"/><path d="M6.4 17.8 V9.6 Q7.4 4.2 13.8 3.4 L17.6 4.6 Q11.8 6 10.6 11 Q10.4 14 11.6 17.6 Z" fill="#3f93c6" stroke="#3a3a3a" stroke-width=".8"/><path d="M13.6 11.4 H17.2 V16.8 H13.6 Z" fill="#fbfbfb" stroke="#3a3a3a" stroke-width=".8"/></svg>
<div class="row" style="top:518px">切除-扫描2</div>
<svg class="abs" style="left:26px;top:541px" width="20" height="20" viewBox="0 0 20 20"><path d="M2.4 5.4 L6.6 2.4 L17.6 1.6 V4.4 Q11.4 5 9.6 10.6 L9.4 18.4 L2.4 17.2 Z" fill="#e4e4e4" stroke="#3a3a3a" stroke-width="1"/><path d="M6.4 17.8 V9.6 Q7.4 4.2 13.8 3.4 L17.6 4.6 Q11.8 6 10.6 11 Q10.4 14 11.6 17.6 Z" fill="#3f93c6" stroke="#3a3a3a" stroke-width=".8"/><path d="M13.6 11.4 H17.2 V16.8 H13.6 Z" fill="#fbfbfb" stroke="#3a3a3a" stroke-width=".8"/></svg>
<div class="row" style="top:540px">切除-扫描3</div>
<svg class="abs" style="left:26px;top:563px" width="20" height="20" viewBox="0 0 20 20"><path d="M2.4 5.4 L6.6 2.4 L17.6 1.6 V4.4 Q11.4 5 9.6 10.6 L9.4 18.4 L2.4 17.2 Z" fill="#e4e4e4" stroke="#3a3a3a" stroke-width="1"/><path d="M6.4 17.8 V9.6 Q7.4 4.2 13.8 3.4 L17.6 4.6 Q11.8 6 10.6 11 Q10.4 14 11.6 17.6 Z" fill="#3f93c6" stroke="#3a3a3a" stroke-width=".8"/><path d="M13.6 11.4 H17.2 V16.8 H13.6 Z" fill="#fbfbfb" stroke="#3a3a3a" stroke-width=".8"/></svg>
<div class="row" style="top:562px">切除-扫描4</div>
<svg class="abs" style="left:26px;top:585px" width="20" height="20" viewBox="0 0 20 20"><path d="M2.4 5.4 L6.6 2.4 L17.6 1.6 V4.4 Q11.4 5 9.6 10.6 L9.4 18.4 L2.4 17.2 Z" fill="#e4e4e4" stroke="#3a3a3a" stroke-width="1"/><path d="M6.4 17.8 V9.6 Q7.4 4.2 13.8 3.4 L17.6 4.6 Q11.8 6 10.6 11 Q10.4 14 11.6 17.6 Z" fill="#3f93c6" stroke="#3a3a3a" stroke-width=".8"/><path d="M13.6 11.4 H17.2 V16.8 H13.6 Z" fill="#fbfbfb" stroke="#3a3a3a" stroke-width=".8"/></svg>
<div class="row" style="top:584px">切除-扫描5</div>
<svg class="abs" style="left:26px;top:607px" width="20" height="20" viewBox="0 0 20 20"><path d="M3.4 12.6 Q9 5.6 16.8 11.4 L18.4 14.4 Q15.6 18.4 8.4 18.4 L3 15.4 Z" fill="#e2e2e2" stroke="#3a3a3a" stroke-width="1"/><path d="M8.4 18.4 Q9.6 13.4 16.8 11.4" fill="none" stroke="#3a3a3a" stroke-width=".8"/><path d="M1.6 6.4 Q6.6 .6 14.6 3.4 L18 7.6 Q10 4 4.4 9.4 Z" fill="#3f93c6" stroke="#2676a8" stroke-width="1"/></svg>
<div class="row" style="top:606px">曲面-等距1</div>
<svg class="abs" style="left:26px;top:629px" width="20" height="20" viewBox="0 0 20 20"><path d="M0 0 H5 V2 H7 V5 H5 V7 H0 Z" transform="translate(2 1.6)" fill="none" stroke="#b4b4b4" stroke-width="1.1"/><path d="M0 0 H5 V2 H7 V5 H5 V7 H0 Z" transform="translate(11 1.6)" fill="none" stroke="#b4b4b4" stroke-width="1.1"/><path d="M0 0 H5 V2 H7 V5 H5 V7 H0 Z" transform="translate(2 11)" fill="none" stroke="#b4b4b4" stroke-width="1.1"/><path d="M0 0 H5 V2 H7 V5 H5 V7 H0 Z" transform="translate(11 11)" fill="none" stroke="#b4b4b4" stroke-width="1.1"/></svg>
<div class="row g" style="top:628px">阵列(线性)6</div>
<svg class="abs" style="left:26px;top:651px" width="20" height="20" viewBox="0 0 20 20"><path d="M2 5.4 L8 2 L18 4.4 L12 8.4 Z" fill="#e6e6e6" stroke="#a8a8a8" stroke-width="1"/><path d="M2 8.6 Q7 7 12 11 L18 7.6 V10.4 L12 14 Q7 10.4 2 11.6 Z" fill="#dadada" stroke="#a8a8a8" stroke-width="1"/><path d="M2 13.8 Q7 12 12 16 L18 12.6 V15 L12 18.8 Q7 15.2 2 16.6 Z" fill="#e6e6e6" stroke="#a8a8a8" stroke-width="1"/></svg>
<div class="row g" style="top:650px">使用曲面切除1</div>
<svg class="abs" style="left:26px;top:673px" width="20" height="20" viewBox="0 0 20 20"><path d="M2 5.4 L8 2 L18 4.4 L12 8.4 Z" fill="#e6e6e6" stroke="#a8a8a8" stroke-width="1"/><path d="M2 8.6 Q7 7 12 11 L18 7.6 V10.4 L12 14 Q7 10.4 2 11.6 Z" fill="#dadada" stroke="#a8a8a8" stroke-width="1"/><path d="M2 13.8 Q7 12 12 16 L18 12.6 V15 L12 18.8 Q7 15.2 2 16.6 Z" fill="#e6e6e6" stroke="#a8a8a8" stroke-width="1"/></svg>
<div class="row g" style="top:672px">使用曲面切除2</div>
<div class="abs" style="left:10px;top:700px;width:0;height:0;border-top:4px solid transparent;border-bottom:4px solid transparent;border-left:4px solid #444"></div>
<svg class="abs" style="left:26px;top:695px" width="20" height="20" viewBox="0 0 20 20"><path d="M8.4 3.4 L14.6 1.4 Q17.6 .8 17.6 3.6 V14.6 Q17.6 16.4 16 17.2 L12.4 18.8 V6.6 Z" fill="#f0f0f0" stroke="#9a9a9a" stroke-width="1"/><path d="M8.4 3.4 L12.4 6.6" stroke="#9a9a9a" stroke-width="1"/><path d="M1.6 7.6 L6.4 5.2 L12.4 6.8 V14.6 L7.4 17.4 L1.6 15.4 Z" fill="#d0d0d0" stroke="#9a9a9a" stroke-width="1"/><path d="M1.6 7.6 L7.4 9.4 L12.4 6.8 L6.4 5.2 Z" fill="#e2e2e2" stroke="#9a9a9a" stroke-width=".8"/><path d="M7.4 9.4 V17.4 L12.4 14.6 V6.8 Z" fill="#bdbdbd" stroke="#9a9a9a" stroke-width=".8"/></svg>
<div class="row g" style="top:694px">凸台-拉伸13</div>
<div class="abs" style="left:8px;top:724px;width:0;height:0;border-left:4px solid transparent;border-right:4px solid transparent;border-top:4px solid #444"></div>
<svg class="abs" style="left:26px;top:717px" width="20" height="20" viewBox="0 0 20 20"><path d="M8.4 3.4 L14.6 1.4 Q17.6 .8 17.6 3.6 V14.6 Q17.6 16.4 16 17.2 L12.4 18.8 V6.6 Z" fill="#f0f0f0" stroke="#9a9a9a" stroke-width="1"/><path d="M8.4 3.4 L12.4 6.6" stroke="#9a9a9a" stroke-width="1"/><path d="M1.6 7.6 L6.4 5.2 L12.4 6.8 V14.6 L7.4 17.4 L1.6 15.4 Z" fill="#d0d0d0" stroke="#9a9a9a" stroke-width="1"/><path d="M1.6 7.6 L7.4 9.4 L12.4 6.8 L6.4 5.2 Z" fill="#e2e2e2" stroke="#9a9a9a" stroke-width=".8"/><path d="M7.4 9.4 V17.4 L12.4 14.6 V6.8 Z" fill="#bdbdbd" stroke="#9a9a9a" stroke-width=".8"/></svg>
<div class="row g" style="top:716px">凸台-拉伸14</div>
<svg class="abs" style="left:49px;top:739px" width="20" height="20" viewBox="0 0 20 20"><path d="M1.6 18.4 V4.4 L9.6 9.6 L18.4 1.8 V18.4 Z" fill="#d4d4d4" stroke="#b0b0b0" stroke-width="1"/><circle cx="13.4" cy="14" r="2.8" fill="#f4f4f4" stroke="#b0b0b0" stroke-width=".8"/></svg>
<div class="row c g" style="top:738px">(-) 草图60</div>
<svg class="abs" style="left:26px;top:761px" width="20" height="20" viewBox="0 0 20 20"><path d="M2 4.6 L6.4 1.8 L16.4 3 Q17.8 3.2 17.8 4.8 V14.4 L13.6 18.2 L3.6 16.6 Q2 16.2 2 14.6 Z" fill="#f0f0f0" stroke="#9a9a9a" stroke-width="1"/><path d="M6.6 4.6 L15.6 5.4 V13.6 L12.6 16.2 V8.6 Z" fill="#bdbdbd" stroke="#9a9a9a" stroke-width=".8"/><path d="M6.6 4.6 L12.6 8.6 L15.6 5.4 Z" fill="#d0d0d0" stroke="#9a9a9a" stroke-width=".6"/><path d="M6.6 4.6 V13 L12.6 16.2" fill="none" stroke="#9a9a9a" stroke-width=".7"/></svg>
<div class="row g" style="top:760px">抽壳6</div>
<div class="abs" style="left:10px;top:788px;width:0;height:0;border-top:4px solid transparent;border-bottom:4px solid transparent;border-left:4px solid #444"></div>
<svg class="abs" style="left:26px;top:783px" width="20" height="20" viewBox="0 0 20 20"><path d="M8.4 3.4 L14.6 1.4 Q17.6 .8 17.6 3.6 V14.6 Q17.6 16.4 16 17.2 L12.4 18.8 V6.6 Z" fill="#f0f0f0" stroke="#9a9a9a" stroke-width="1"/><path d="M8.4 3.4 L12.4 6.6" stroke="#9a9a9a" stroke-width="1"/><path d="M1.6 7.6 L6.4 5.2 L12.4 6.8 V14.6 L7.4 17.4 L1.6 15.4 Z" fill="#d0d0d0" stroke="#9a9a9a" stroke-width="1"/><path d="M1.6 7.6 L7.4 9.4 L12.4 6.8 L6.4 5.2 Z" fill="#e2e2e2" stroke="#9a9a9a" stroke-width=".8"/><path d="M7.4 9.4 V17.4 L12.4 14.6 V6.8 Z" fill="#bdbdbd" stroke="#9a9a9a" stroke-width=".8"/></svg>
<div class="row g" style="top:782px">凸台-拉伸15</div>
<div class="abs" style="left:8px;top:812px;width:0;height:0;border-left:4px solid transparent;border-right:4px solid transparent;border-top:4px solid #444"></div>
<svg class="abs" style="left:26px;top:805px" width="20" height="20" viewBox="0 0 20 20"><path d="M8.4 3.4 L14.6 1.4 Q17.6 .8 17.6 3.6 V14.6 Q17.6 16.4 16 17.2 L12.4 18.8 V6.6 Z" fill="#f0f0f0" stroke="#9a9a9a" stroke-width="1"/><path d="M8.4 3.4 L12.4 6.6" stroke="#9a9a9a" stroke-width="1"/><path d="M1.6 7.6 L6.4 5.2 L12.4 6.8 V14.6 L7.4 17.4 L1.6 15.4 Z" fill="#d0d0d0" stroke="#9a9a9a" stroke-width="1"/><path d="M1.6 7.6 L7.4 9.4 L12.4 6.8 L6.4 5.2 Z" fill="#e2e2e2" stroke="#9a9a9a" stroke-width=".8"/><path d="M7.4 9.4 V17.4 L12.4 14.6 V6.8 Z" fill="#bdbdbd" stroke="#9a9a9a" stroke-width=".8"/></svg>
<div class="row g" style="top:804px">凸台-拉伸16</div>
<svg class="abs" style="left:100px;top:492px" width="115" height="200" viewBox="100 630 115 200"><path d="M120 644 H180 Q197 644 197 661" fill="none" stroke="#2180c0" stroke-width="1.5"/><path d="M114.6 644 L123.6 640.4 V647.6 Z" fill="#2180c0"/><path d="M120 666 H180 Q197 666 197 683" fill="none" stroke="#2180c0" stroke-width="1.5"/><path d="M114.6 666 L123.6 662.4 V669.6 Z" fill="#2180c0"/><path d="M120 688 H180 Q197 688 197 705" fill="none" stroke="#2180c0" stroke-width="1.5"/><path d="M114.6 688 L123.6 684.4 V691.6 Z" fill="#2180c0"/><path d="M120 710 H180 Q197 710 197 727" fill="none" stroke="#2180c0" stroke-width="1.5"/><path d="M114.6 710 L123.6 706.4 V713.6 Z" fill="#2180c0"/><path d="M120 732 H180 Q197 732 197 749" fill="none" stroke="#2180c0" stroke-width="1.5"/><path d="M114.6 732 L123.6 728.4 V735.6 Z" fill="#2180c0"/><path d="M197 654 V754" stroke="#2180c0" stroke-width="1.5"/><path d="M123 776 H176 Q197 776 197 756" fill="none" stroke="#6a409c" stroke-width="1.5"/><path d="M117.6 776 L126.6 772.4 V779.6 Z" fill="#6a409c"/><path d="M141 798 H176 Q197 798 197 778" fill="none" stroke="#6a409c" stroke-width="1.5"/><path d="M135.6 798 L144.6 794.4 V801.6 Z" fill="#6a409c"/><path d="M141 820 H176 Q197 820 197 800" fill="none" stroke="#6a409c" stroke-width="1.5"/><path d="M135.6 820 L144.6 816.4 V823.6 Z" fill="#6a409c"/><path d="M197 754 V800" stroke="#6a409c" stroke-width="1.5"/><path d="M116 754 H190" stroke="#555" stroke-width="1.1" stroke-dasharray="3.4 2.6"/><circle cx="197" cy="754" r="7" fill="#e4e4e4" stroke="#3c3c3c" stroke-width="1.2"/></svg>
<div class="abs" style="left:313px;top:77px;width:15px;height:736px;background:#f0f0f0"></div>
<div class="abs" style="left:313px;top:438px;width:15px;height:240px;background:#cdcdcd"></div>
<svg class="abs" style="left:314px;top:82px" width="14" height="10" viewBox="0 0 14 10"><path d="M2.6 7.4 L7 3 L11.4 7.4" fill="none" stroke="#444" stroke-width="1.5"/></svg>
<svg class="abs" style="left:314px;top:799px" width="14" height="10" viewBox="0 0 14 10"><path d="M2.6 2.6 L7 7 L11.4 2.6" fill="none" stroke="#444" stroke-width="1.5"/></svg>
<div class="abs" style="left:0;top:813px;width:313px;height:19px;background:#f0f0f0"></div>
<div class="abs" style="left:18px;top:815px;width:192px;height:14px;background:#cdcdcd"></div>
<svg class="abs" style="left:4px;top:815px" width="10" height="14" viewBox="0 0 10 14"><path d="M7.4 2.6 L3 7 L7.4 11.4" fill="none" stroke="#444" stroke-width="1.5"/></svg>
<svg class="abs" style="left:298px;top:815px" width="10" height="14" viewBox="0 0 10 14"><path d="M2.6 2.6 L7 7 L2.6 11.4" fill="none" stroke="#444" stroke-width="1.5"/></svg>
</div>
<div class="abs" style="left:330px;top:138px;width:1px;height:832px;background:#707070"></div>
<div class="abs" style="left:331px;top:138px;width:1px;height:832px;background:#a6a6a6"></div>
<div class="abs" style="left:330px;top:525px;width:9px;height:39px;box-sizing:border-box;background:#f8f8f8;border:1px solid #707070;border-left:none;z-index:4"></div>
<div class="abs" style="left:331px;top:541px;width:6px;height:6px;border-radius:50%;border:1px solid #8e8e8e;background:#d2d2d2;box-sizing:border-box;z-index:5"></div>

<div id="view">
<svg class="abs" style="left:0;top:0" width="1392" height="832" viewBox="332 138 1392 832">
<defs>
<linearGradient id="gHi1" gradientUnits="userSpaceOnUse" x1="1000" y1="245" x2="994" y2="290"><stop offset="0" stop-color="#1a1a1a"/><stop offset=".35" stop-color="#363636"/><stop offset=".64" stop-color="#4a4a4a"/><stop offset=".86" stop-color="#3a3a3a"/><stop offset="1" stop-color="#242424"/></linearGradient>
<linearGradient id="gHiP" gradientUnits="userSpaceOnUse" x1="627" y1="500" x2="667" y2="500"><stop offset="0" stop-color="#1a1a1a"/><stop offset=".5" stop-color="#3c3c3c"/><stop offset=".8" stop-color="#4a4a4a"/><stop offset="1" stop-color="#262626"/></linearGradient>
<linearGradient id="gHiD" gradientUnits="userSpaceOnUse" x1="580" y1="250" x2="607" y2="281"><stop offset="0" stop-color="#0a0a0a"/><stop offset=".5" stop-color="#383838"/><stop offset=".8" stop-color="#444"/><stop offset="1" stop-color="#1e1e1e"/></linearGradient>
<linearGradient id="gHiR" gradientUnits="userSpaceOnUse" x1="1660" y1="440" x2="1625" y2="472"><stop offset="0" stop-color="#1c1c1c"/><stop offset=".45" stop-color="#4a4a4a"/><stop offset=".75" stop-color="#5a5a5a"/><stop offset="1" stop-color="#222"/></linearGradient>
<linearGradient id="gRefl" gradientUnits="userSpaceOnUse" x1="600" y1="850" x2="600" y2="945"><stop offset="0" stop-color="#d9b8b8" stop-opacity=".75"/><stop offset="1" stop-color="#c8c0c0" stop-opacity="0"/></linearGradient>
<linearGradient id="gPR" gradientUnits="userSpaceOnUse" x1="1664" y1="700" x2="1708" y2="700"><stop offset="0" stop-color="#141414"/><stop offset=".5" stop-color="#343434"/><stop offset="1" stop-color="#161616"/></linearGradient>
<filter id="blur1"><feGaussianBlur stdDeviation="1.2"/></filter>
<filter id="tex" x="0" y="0" width="100%" height="100%"><feTurbulence type="fractalNoise" baseFrequency="0.09 0.05" numOctaves="2" seed="4" result="n"/><feColorMatrix in="n" type="matrix" values="0 0 0 0 1  0 0 0 0 1  0 0 0 0 1  1.4 0 0 0 -0.62"/><feComposite in2="SourceGraphic" operator="in"/></filter>
<filter id="tex2" x="0" y="0" width="100%" height="100%" color-interpolation-filters="sRGB"><feTurbulence type="fractalNoise" baseFrequency="0.1 0.32" numOctaves="2" seed="11" result="n"/><feColorMatrix in="n" type="matrix" values="0 0 0 0 1  0 0 0 0 1  0 0 0 0 1  3.2 0 0 0 -1.75"/></filter>
</defs>
<rect x="332" y="138" width="1392" height="832" fill="#c0c0c0"/>
<polygon points="752.0,775.0 949.0,793.0 967.0,809.0 1724.0,910.6 1724.0,972.0 1612.0,972.0 901.0,878.0 861.0,884.0 691.0,851.0" fill="#565656" filter="url(#blur1)"/>
<polygon points="469,822 486,836 652,858 692,850 692,935 470,935" fill="url(#gRefl)"/>
<polygon points="464.5,613.1 499.6,577.3 714.4,551.7 725.7,551.7 751.2,574.9 756.5,780.6 691.7,848.3 652.1,856.0 485.6,833.2 469.8,819.2" fill="#b62b2b" stroke="#000" stroke-width="1.2" stroke-linejoin="round" />
<polygon points="464.5,613.1 499.6,577.3 714.4,551.7 725.7,551.7 751.2,574.9 687.1,642.2 647.5,649.2 482.1,627.4" fill="#6d0b0b" stroke="#000" stroke-width="1" stroke-linejoin="round" />
<polygon points="489.1,613.4 501.0,600.0 713.4,565.0 736.2,565.0 678.3,628.1 646.8,633.4" fill="#5f0909" />
<polygon points="482.1,627.4 647.5,649.2 652.1,856.0 485.6,833.2" fill="#9c0404" stroke="#000" stroke-width="1" stroke-linejoin="round" />
<polygon points="647.5,649.2 687.1,642.2 691.7,848.3 652.1,856.0" fill="#b00606" stroke="#000" stroke-width="1" stroke-linejoin="round" />
<polygon points="464.5,613.1 482.1,627.4 485.6,833.2 469.8,819.2" fill="#b62b2b" stroke="#000" stroke-width="1" stroke-linejoin="round" />
<polygon points="687.1,642.2 751.2,574.9 756.5,780.6 691.7,848.3" fill="#b62b2b" stroke="#000" stroke-width="1" stroke-linejoin="round" />
<polyline points="464.5,613.1 489.1,613.4" fill="none" stroke="#000" stroke-width="1" stroke-linejoin="round" stroke-linecap="round" />
<polyline points="489.1,613.4 646.8,633.4 678.3,628.1 736.2,565.0" fill="none" stroke="#000" stroke-width="1" stroke-linejoin="round" stroke-linecap="round" />
<polyline points="489.1,613.4 482.1,627.4" fill="none" stroke="#000" stroke-width="1" stroke-linejoin="round" stroke-linecap="round" />
<polyline points="646.8,633.4 647.5,649.2" fill="none" stroke="#000" stroke-width="1" stroke-linejoin="round" stroke-linecap="round" />
<polyline points="678.3,628.1 687.1,642.2" fill="none" stroke="#000" stroke-width="1" stroke-linejoin="round" stroke-linecap="round" />
<polyline points="489.1,613.4 501.0,600.0" fill="none" stroke="#000" stroke-width="1" stroke-linejoin="round" stroke-linecap="round" />
<polygon points="501.5,602.0 498.0,470.0 495.0,356.0 496.0,346.0 539.4,298.3 618.5,231.5 703.8,154.1 708.8,154.1 900.0,179.6 1280.0,232.0 1522.6,265.6 1586.0,283.0 1612.4,308.5 1724.0,431.8 1724.0,744.0 1718.0,751.0 1708.0,759.5 1699.0,763.3 1690.0,763.6 1556.0,747.0 1549.0,744.8 1543.6,740.5 1540.8,735.0 1540.5,730.0 1536.0,592.8 1536.0,552.6 1513.0,525.8 1465.0,473.4 1280.0,449.2 860.0,393.0 728.0,375.8 716.0,381.0 709.6,394.3 713.4,565.0 712.0,585.0 700.0,604.0 680.0,620.0 657.3,622.9 520.6,608.9 507.0,606.0" fill="#131313" stroke="#000" stroke-width="1.2" stroke-linejoin="round" />
<polygon points="496.0,350.0 515.4,369.6 521.0,606.0 501.5,600.0" fill="#101010" />
<polygon points="515.4,369.6 625.5,427.7 630.0,620.0 521.0,608.0" fill="#181818" />
<polygon points="625.5,427.7 642.8,433.9 662.6,433.9 665.0,434.0 669.5,622.0 630.0,620.0" fill="url(#gHiP)" />
<polygon points="665.0,434.0 709.6,394.3 713.4,565.0 712.0,585.0 700.0,604.0 680.0,620.0 669.5,622.0" fill="#0f0f0f" />
<polygon points="496.0,346.0 539.4,298.3 618.5,231.5 703.8,154.1 663.0,200.6 656.9,203.1 661.8,243.9 515.4,369.6" fill="url(#gHiD)" />
<polygon points="515.4,369.6 661.8,243.9 709.6,356.0 625.5,427.7" fill="#181818" />
<polygon points="625.5,427.7 709.6,356.0 728.0,375.8 716.0,381.0 709.6,394.3 665.0,434.0 642.8,433.9" fill="#1b1b1b" />
<polygon points="703.8,154.1 708.8,154.1 900.0,179.6 1280.0,232.0 1522.6,265.6 1507.9,311.5 1280.0,285.7 757.0,213.0 663.0,200.6" fill="#0d0d0d" />
<polygon points="663.0,200.6 757.0,213.0 1280.0,285.7 1507.9,311.5 1500.0,355.0 1280.0,327.2 752.0,255.0 661.8,243.9 656.9,203.1" fill="url(#gHi1)" />
<polygon points="661.8,243.9 752.0,255.0 1280.0,327.2 1500.0,355.0 1500.0,385.0 1467.7,457.3 1280.0,433.0 860.0,374.5 709.6,356.0" fill="#1a1a1a" />
<polygon points="1500.0,355.0 1535.0,352.0 1510.0,470.0 1490.0,478.0 1467.7,457.3 1500.0,385.0" fill="#181818" />
<polygon points="709.6,356.0 860.0,374.5 1280.0,433.0 1467.7,457.3 1465.0,473.4 1280.0,449.2 860.0,393.0 728.0,375.8" fill="#0b0b0b" />
<polygon points="1586.0,283.0 1612.4,308.5 1724.0,431.8 1724.0,482.0 1702.3,502.4 1586.8,378.2 1560.0,350.0" fill="#0e0e0e" />
<polygon points="1560.0,350.0 1586.8,378.2 1702.3,502.4 1702.0,520.0 1679.2,518.2 1571.0,418.6 1545.0,395.0" fill="url(#gHiR)" />
<polygon points="1545.0,395.0 1571.0,418.6 1679.2,518.2 1600.0,520.0 1547.9,545.7 1527.6,522.6 1500.0,480.0" fill="#1a1a1a" />
<polygon points="1536.0,560.0 1550.8,575.0 1558.0,747.0 1549.0,744.8 1543.6,740.5 1540.5,733.5 1536.0,592.8" fill="#191919" />
<polygon points="1666.0,520.0 1706.0,520.0 1705.2,761.0 1699.0,763.3 1690.0,763.6 1666.8,760.6" fill="url(#gPR)" />
<clipPath id="cpArch"><polygon points="501.5,602.0 498.0,470.0 495.0,356.0 496.0,346.0 539.4,298.3 618.5,231.5 703.8,154.1 708.8,154.1 900.0,179.6 1280.0,232.0 1522.6,265.6 1586.0,283.0 1612.4,308.5 1724.0,431.8 1724.0,744.0 1718.0,751.0 1708.0,759.5 1699.0,763.3 1690.0,763.6 1556.0,747.0 1549.0,744.8 1543.6,740.5 1540.8,735.0 1540.5,730.0 1536.0,592.8 1536.0,552.6 1513.0,525.8 1465.0,473.4 1280.0,449.2 860.0,393.0 728.0,375.8 716.0,381.0 709.6,394.3 713.4,565.0 712.0,585.0 700.0,604.0 680.0,620.0 657.3,622.9 520.6,608.9 507.0,606.0"/></clipPath>
<g clip-path="url(#cpArch)" opacity=".055"><g transform="rotate(42 1000 450)"><rect x="250" y="-250" width="1500" height="1400" fill="#fff" filter="url(#tex2)"/></g></g>
<polyline points="663.0,200.6 757.0,213.0 1280.0,285.7 1507.9,311.5" fill="none" stroke="#000" stroke-width="1" stroke-linejoin="round" stroke-linecap="round" />
<polyline points="661.8,243.9 752.0,255.0 1280.0,327.2 1500.0,355.0" fill="none" stroke="#000" stroke-width="1" stroke-linejoin="round" stroke-linecap="round" />
<polyline points="709.6,356.0 860.0,374.5 1280.0,433.0 1467.7,457.3" fill="none" stroke="#000" stroke-width="1" stroke-linejoin="round" stroke-linecap="round" />
<polyline points="728.0,375.8 860.0,393.0 1280.0,449.2 1465.0,473.4" fill="none" stroke="#000" stroke-width="1" stroke-linejoin="round" stroke-linecap="round" />
<polyline points="515.4,369.6 520.4,570.0 521.0,608.0" fill="none" stroke="#000" stroke-width="1" stroke-linejoin="round" stroke-linecap="round" />
<polyline points="625.5,427.7 629.2,570.0 630.0,620.0" fill="none" stroke="#000" stroke-width="1" stroke-linejoin="round" stroke-linecap="round" />
<polyline points="665.0,434.0 668.8,570.0 669.5,622.0" fill="none" stroke="#000" stroke-width="1" stroke-linejoin="round" stroke-linecap="round" />
<polyline points="515.4,369.6 625.5,427.7" fill="none" stroke="#000" stroke-width="1" stroke-linejoin="round" stroke-linecap="round" />
<polyline points="625.5,427.7 709.6,356.0" fill="none" stroke="#000" stroke-width="1" stroke-linejoin="round" stroke-linecap="round" />
<polyline points="515.4,369.6 661.8,243.9" fill="none" stroke="#000" stroke-width="1" stroke-linejoin="round" stroke-linecap="round" />
<polyline points="661.8,243.9 709.6,356.0" fill="none" stroke="#000" stroke-width="1" stroke-linejoin="round" stroke-linecap="round" />
<polyline points="1586.8,378.2 1702.3,502.4 1724.0,482.0" fill="none" stroke="#000" stroke-width="1" stroke-linejoin="round" stroke-linecap="round" />
<polyline points="1571.0,418.6 1679.2,518.2" fill="none" stroke="#000" stroke-width="1" stroke-linejoin="round" stroke-linecap="round" />
<polyline points="1527.6,522.6 1547.9,545.7" fill="none" stroke="#000" stroke-width="1" stroke-linejoin="round" stroke-linecap="round" />
<polyline points="1550.8,575.0 1553.0,650.0 1558.0,746.0" fill="none" stroke="#000" stroke-width="1" stroke-linejoin="round" stroke-linecap="round" />
<polyline points="1557.5,598.0 1560.0,746.5" fill="none" stroke="#000" stroke-width="1" stroke-linejoin="round" stroke-linecap="round" />
<polyline points="1666.0,520.0 1666.8,760.6" fill="none" stroke="#000" stroke-width="1" stroke-linejoin="round" stroke-linecap="round" />
<polyline points="1706.0,520.0 1705.2,762.0" fill="none" stroke="#000" stroke-width="1" stroke-linejoin="round" stroke-linecap="round" />
<polyline points="1702.3,502.4 1702.3,520.0" fill="none" stroke="#000" stroke-width="1" stroke-linejoin="round" stroke-linecap="round" />
<polyline points="1467.7,457.3 1500.0,385.0 1509.0,352.0" fill="none" stroke="#000" stroke-width="1" stroke-linejoin="round" stroke-linecap="round" />
<polyline points="703.8,154.1 708.8,154.1 900.0,179.6 1280.0,232.0 1522.6,265.6" fill="none" stroke="#000" stroke-width="2.4" stroke-linejoin="round" stroke-linecap="round" />
<polyline points="1612.4,308.5 1724.0,431.8" fill="none" stroke="#000" stroke-width="2.2" stroke-linejoin="round" stroke-linecap="round" />
<polyline points="496.0,346.0 539.4,298.3 618.5,231.5 703.8,154.1" fill="none" stroke="#000" stroke-width="2" stroke-linejoin="round" stroke-linecap="round" />
<path d="M656.9 203.1 Q655 222 661.8 243.9" fill="none" stroke="#000" stroke-width="1"/>
<path d="M709.6 356 Q716 370 728 375.8" fill="none" stroke="#000" stroke-width="1"/>
<path d="M642.8 433.9 Q652 436 665 434" fill="none" stroke="#000" stroke-width="1"/>
<polyline points="534.0,647.4 468.0,715.8 484.9,731.5 650.3,754.3 687.1,747.3 750.2,680.0" fill="none" stroke="#7ab6f0" stroke-width="1.2" stroke-linejoin="round" stroke-linecap="round" />
<polyline points="533.0,651.0 471.0,715.5 486.0,729.0 650.3,751.5 686.0,744.5 749.0,682.5" fill="none" stroke="#4a6fb0" stroke-width="0.8" stroke-linejoin="round" stroke-linecap="round" />
<circle cx="534.4" cy="646.6" r="2" fill="none" stroke="#7ab6f0" stroke-width=".9"/>
<circle cx="750.4" cy="679.4" r="3.6" fill="#1414e0"/>
<polygon points="761.3,159.7 749.8,172.1 856.2,207.5 867.7,198.4" fill="#82869d" stroke="#000" stroke-width="1" stroke-linejoin="round" />
<polygon points="859.5,138.0 867.2,138.0 867.7,149.0 859.5,156.1" fill="#a9adc0" stroke="#000" stroke-width="1" stroke-linejoin="round" />
<polygon points="811.6,149.8 820.7,152.3 819.0,177.8 810.8,187.4" fill="#a9adc0" stroke="#000" stroke-width="1" stroke-linejoin="round" />
<polygon points="812.5,149.5 859.5,156.1 862.0,153.5 820.7,147.5" fill="#6f7389" stroke="#000" stroke-width="0.8" stroke-linejoin="round" />
<polygon points="801.2,138.0 859.5,138.0 859.5,156.1 812.5,149.5 811.6,149.8 810.8,187.4 801.2,183.6" fill="#9194a3" stroke="#000" stroke-width="1" stroke-linejoin="round" />
<polygon points="843.0,231.0 847.4,233.0 810.2,335.6 806.5,337.9" fill="#a9adc0" stroke="#000" stroke-width="1" stroke-linejoin="round" />
<polygon points="758.9,201.0 751.3,318.6 806.5,337.9 843.0,231.0" fill="#9194a3" stroke="#000" stroke-width="1" stroke-linejoin="round" />
<polygon points="749.8,172.1 745.7,196.8 852.0,234.7 856.2,207.5" fill="#9497a6" stroke="#000" stroke-width="1" stroke-linejoin="round" />
<polygon points="856.2,207.5 867.7,198.4 865.2,222.3 852.0,234.7" fill="#a9adc0" stroke="#000" stroke-width="1" stroke-linejoin="round" />
<polyline points="860.5,204.0 857.0,230.0" fill="none" stroke="#000" stroke-width="0.7" stroke-linejoin="round" stroke-linecap="round" />
<path d="M1026.9 172.9 C1014.4 172.9 998.5 174.3 986.1 177.0 C973.6 179.7 963.4 183.8 952.0 188.9 C940.7 194.0 927.7 200.5 918.0 207.6 C908.4 214.7 901.0 222.4 894.2 231.4 C887.4 240.5 881.6 251.3 877.2 262.0 C872.8 272.8 869.5 285.9 867.7 296.1 C865.9 306.3 865.9 313.6 866.3 323.3 C866.8 332.9 868.0 343.7 870.4 353.9 C872.8 364.1 876.1 374.3 880.6 384.5 C885.1 394.7 890.8 405.5 897.6 415.1 C904.4 424.7 912.9 434.4 921.4 442.3 C929.9 450.2 939.0 457.3 948.6 462.7 C958.3 468.1 969.0 473.2 979.3 474.6 C989.5 476.0 999.7 473.5 1009.9 471.2 C1020.1 469.0 1030.3 464.7 1040.5 461.0 C1050.7 457.3 1060.9 452.7 1071.1 449.1 C1081.3 445.5 1093.2 441.4 1101.7 439.6 C1110.2 437.8 1115.3 437.5 1122.1 438.2 C1128.9 439.0 1135.1 441.2 1142.5 444.0 C1149.9 446.8 1158.4 452.0 1166.3 455.2 C1174.3 458.5 1182.8 461.9 1190.1 463.4 C1197.5 464.9 1203.2 465.7 1210.5 464.4 C1217.9 463.2 1227.0 460.7 1234.4 455.9 C1241.7 451.1 1248.8 444.0 1254.8 435.5 C1260.7 427.0 1266.0 415.7 1270.1 404.9 C1274.1 394.1 1277.2 382.2 1279.3 370.9 C1281.3 359.5 1282.7 347.1 1282.7 336.9 C1282.7 326.7 1281.1 317.6 1279.3 309.7 C1277.4 301.7 1275.3 296.1 1271.8 289.3 C1268.3 282.4 1263.8 275.1 1258.2 268.8 C1252.5 262.6 1245.7 256.9 1237.8 251.8 C1229.8 246.7 1220.7 242.5 1210.5 238.2 C1200.3 234.0 1187.9 230.3 1176.5 226.3 C1165.2 222.4 1152.7 218.7 1142.5 214.4 C1132.3 210.2 1124.4 205.4 1115.3 200.8 C1106.2 196.3 1097.2 191.2 1088.1 187.2 C1079.0 183.2 1071.1 179.4 1060.9 177.0 C1050.7 174.6 1039.3 172.9 1026.9 172.9 Z" fill="#c3c3c3" stroke="#000" stroke-width="1.1"/>
<path d="M1025.2 181.8 C1012.9 181.8 998.1 182.8 986.1 185.2 C974.0 187.5 963.6 191.3 952.7 195.7 C941.8 200.1 929.9 205.1 920.7 211.7 C911.6 218.3 904.2 226.6 897.6 235.5 C891.0 244.5 885.4 255.1 881.3 265.4 C877.2 275.8 874.4 288.1 872.8 297.8 C871.1 307.4 871.0 313.9 871.4 323.3 C871.8 332.6 872.8 343.7 875.2 353.9 C877.5 364.1 881.0 374.6 885.4 384.5 C889.8 394.4 895.1 404.3 901.7 413.4 C908.3 422.5 916.6 431.7 924.8 439.3 C933.1 446.8 942.2 453.6 951.4 458.6 C960.5 463.7 970.2 468.4 979.9 469.5 C989.7 470.7 999.8 467.9 1009.9 465.4 C1020.0 463.0 1030.3 458.6 1040.5 454.9 C1050.7 451.2 1060.9 446.5 1071.1 443.0 C1081.3 439.5 1093.1 435.5 1101.7 433.8 C1110.3 432.1 1115.7 432.1 1122.8 432.8 C1129.9 433.5 1136.7 435.5 1144.2 438.2 C1151.8 441.0 1160.3 446.2 1168.0 449.5 C1175.8 452.7 1183.7 456.1 1190.8 457.6 C1197.9 459.1 1203.7 459.8 1210.5 458.6 C1217.3 457.4 1225.3 454.9 1231.6 450.5 C1238.0 446.1 1243.8 440.2 1248.6 432.1 C1253.5 424.1 1257.4 412.5 1260.9 402.2 C1264.4 391.9 1267.7 381.1 1269.7 370.2 C1271.8 359.3 1273.0 346.8 1273.1 336.9 C1273.2 326.9 1272.1 317.8 1270.4 310.3 C1268.8 302.9 1266.6 298.0 1263.3 292.0 C1260.0 285.9 1255.8 279.6 1250.7 273.9 C1245.5 268.3 1239.5 262.7 1232.3 258.0 C1225.2 253.3 1217.4 249.7 1207.8 245.7 C1198.2 241.7 1186.0 238.1 1174.8 234.1 C1163.7 230.2 1151.0 226.2 1140.8 221.9 C1130.6 217.6 1122.7 212.8 1113.6 208.3 C1104.5 203.8 1095.4 198.6 1086.4 194.7 C1077.4 190.8 1069.7 187.0 1059.5 184.8 C1049.3 182.7 1037.4 181.7 1025.2 181.8 Z" fill="#b1b1b1" stroke="#2a2a2a" stroke-width=".9"/>
<clipPath id="cpSign"><path d="M1023.5 192.3 C1011.5 192.3 997.7 193.3 986.1 195.4 C974.4 197.5 963.8 200.7 953.7 204.9 C943.7 209.1 934.0 214.3 925.5 220.5 C917.0 226.8 909.2 234.4 902.7 242.7 C896.2 250.9 890.5 260.4 886.4 269.9 C882.3 279.3 879.5 290.6 877.9 299.5 C876.2 308.4 876.2 314.2 876.5 323.3 C876.9 332.3 877.7 343.7 879.9 353.9 C882.2 364.1 885.8 374.9 890.1 384.5 C894.5 394.1 899.8 403.1 906.1 411.7 C912.5 420.3 920.3 429.1 928.2 436.2 C936.2 443.3 945.0 449.5 953.7 454.2 C962.5 458.9 971.6 463.5 981.0 464.4 C990.3 465.4 999.9 462.6 1009.9 460.0 C1019.8 457.4 1030.3 452.9 1040.5 449.1 C1050.7 445.3 1060.9 440.7 1071.1 437.2 C1081.3 433.7 1092.9 429.7 1101.7 428.0 C1110.5 426.3 1116.4 426.2 1123.8 427.0 C1131.2 427.8 1138.3 430.0 1145.9 432.8 C1153.6 435.6 1162.1 440.8 1169.7 444.0 C1177.4 447.2 1185.0 450.4 1191.8 451.8 C1198.6 453.3 1204.3 453.7 1210.5 452.5 C1216.8 451.4 1223.6 449.0 1229.3 445.0 C1234.9 441.1 1240.3 436.2 1244.6 428.7 C1248.8 421.2 1251.8 409.7 1254.8 399.8 C1257.7 389.9 1260.5 379.7 1262.2 369.2 C1263.9 358.7 1265.0 346.5 1265.0 336.9 C1265.0 327.2 1263.8 318.4 1262.2 311.4 C1260.7 304.3 1258.5 300.0 1255.4 294.4 C1252.4 288.7 1248.6 282.7 1243.9 277.3 C1239.1 272.0 1233.4 266.3 1226.9 262.0 C1220.3 257.8 1213.4 255.2 1204.4 251.8 C1195.5 248.4 1184.0 245.3 1173.1 241.6 C1162.2 238.0 1149.3 234.1 1139.1 230.1 C1128.9 226.0 1121.0 221.5 1111.9 217.1 C1102.8 212.8 1093.7 207.8 1084.7 204.2 C1075.7 200.6 1068.4 197.7 1058.2 195.7 C1048.0 193.7 1035.5 192.4 1023.5 192.3 Z"/></clipPath>
<path d="M1023.5 192.3 C1011.5 192.3 997.7 193.3 986.1 195.4 C974.4 197.5 963.8 200.7 953.7 204.9 C943.7 209.1 934.0 214.3 925.5 220.5 C917.0 226.8 909.2 234.4 902.7 242.7 C896.2 250.9 890.5 260.4 886.4 269.9 C882.3 279.3 879.5 290.6 877.9 299.5 C876.2 308.4 876.2 314.2 876.5 323.3 C876.9 332.3 877.7 343.7 879.9 353.9 C882.2 364.1 885.8 374.9 890.1 384.5 C894.5 394.1 899.8 403.1 906.1 411.7 C912.5 420.3 920.3 429.1 928.2 436.2 C936.2 443.3 945.0 449.5 953.7 454.2 C962.5 458.9 971.6 463.5 981.0 464.4 C990.3 465.4 999.9 462.6 1009.9 460.0 C1019.8 457.4 1030.3 452.9 1040.5 449.1 C1050.7 445.3 1060.9 440.7 1071.1 437.2 C1081.3 433.7 1092.9 429.7 1101.7 428.0 C1110.5 426.3 1116.4 426.2 1123.8 427.0 C1131.2 427.8 1138.3 430.0 1145.9 432.8 C1153.6 435.6 1162.1 440.8 1169.7 444.0 C1177.4 447.2 1185.0 450.4 1191.8 451.8 C1198.6 453.3 1204.3 453.7 1210.5 452.5 C1216.8 451.4 1223.6 449.0 1229.3 445.0 C1234.9 441.1 1240.3 436.2 1244.6 428.7 C1248.8 421.2 1251.8 409.7 1254.8 399.8 C1257.7 389.9 1260.5 379.7 1262.2 369.2 C1263.9 358.7 1265.0 346.5 1265.0 336.9 C1265.0 327.2 1263.8 318.4 1262.2 311.4 C1260.7 304.3 1258.5 300.0 1255.4 294.4 C1252.4 288.7 1248.6 282.7 1243.9 277.3 C1239.1 272.0 1233.4 266.3 1226.9 262.0 C1220.3 257.8 1213.4 255.2 1204.4 251.8 C1195.5 248.4 1184.0 245.3 1173.1 241.6 C1162.2 238.0 1149.3 234.1 1139.1 230.1 C1128.9 226.0 1121.0 221.5 1111.9 217.1 C1102.8 212.8 1093.7 207.8 1084.7 204.2 C1075.7 200.6 1068.4 197.7 1058.2 195.7 C1048.0 193.7 1035.5 192.4 1023.5 192.3 Z" fill="#979797"/>
<path d="M1063.6 203.5 C1064.3 207.6 1065.3 219.4 1067.7 228.0 C1070.1 236.6 1073.4 245.6 1077.9 255.2 C1082.4 264.9 1087.5 275.6 1094.9 285.9 C1102.3 296.1 1111.9 306.8 1122.1 316.5 C1132.3 326.1 1144.8 335.7 1156.1 343.7 C1167.5 351.6 1178.8 358.4 1190.1 364.1 C1201.5 369.8 1212.6 374.2 1224.1 377.7 C1235.7 381.2 1253.3 383.9 1259.2 385.2 L1290 384 L1290 180 L1062 150 Z" fill="#6e2020" stroke="#1a0a0a" stroke-width="1" clip-path="url(#cpSign)"/>
<path d="M873.8 319.2 C878.3 320.4 892.0 323.2 901.0 326.7 C910.1 330.2 919.7 334.6 928.2 340.3 C936.7 345.9 945.2 353.3 952.0 360.7 C958.8 368.0 964.5 376.0 969.0 384.5 C973.6 393.0 977.0 402.6 979.3 411.7 C981.5 420.8 982.0 429.8 982.7 438.9 C983.3 448.0 982.9 461.6 983.0 466.1 L983 480 L860 480 L860 318 Z" fill="#04458d" stroke="#06152e" stroke-width="1" clip-path="url(#cpSign)"/>
<path d="M1023.5 192.3 C1011.5 192.3 997.7 193.3 986.1 195.4 C974.4 197.5 963.8 200.7 953.7 204.9 C943.7 209.1 934.0 214.3 925.5 220.5 C917.0 226.8 909.2 234.4 902.7 242.7 C896.2 250.9 890.5 260.4 886.4 269.9 C882.3 279.3 879.5 290.6 877.9 299.5 C876.2 308.4 876.2 314.2 876.5 323.3 C876.9 332.3 877.7 343.7 879.9 353.9 C882.2 364.1 885.8 374.9 890.1 384.5 C894.5 394.1 899.8 403.1 906.1 411.7 C912.5 420.3 920.3 429.1 928.2 436.2 C936.2 443.3 945.0 449.5 953.7 454.2 C962.5 458.9 971.6 463.5 981.0 464.4 C990.3 465.4 999.9 462.6 1009.9 460.0 C1019.8 457.4 1030.3 452.9 1040.5 449.1 C1050.7 445.3 1060.9 440.7 1071.1 437.2 C1081.3 433.7 1092.9 429.7 1101.7 428.0 C1110.5 426.3 1116.4 426.2 1123.8 427.0 C1131.2 427.8 1138.3 430.0 1145.9 432.8 C1153.6 435.6 1162.1 440.8 1169.7 444.0 C1177.4 447.2 1185.0 450.4 1191.8 451.8 C1198.6 453.3 1204.3 453.7 1210.5 452.5 C1216.8 451.4 1223.6 449.0 1229.3 445.0 C1234.9 441.1 1240.3 436.2 1244.6 428.7 C1248.8 421.2 1251.8 409.7 1254.8 399.8 C1257.7 389.9 1260.5 379.7 1262.2 369.2 C1263.9 358.7 1265.0 346.5 1265.0 336.9 C1265.0 327.2 1263.8 318.4 1262.2 311.4 C1260.7 304.3 1258.5 300.0 1255.4 294.4 C1252.4 288.7 1248.6 282.7 1243.9 277.3 C1239.1 272.0 1233.4 266.3 1226.9 262.0 C1220.3 257.8 1213.4 255.2 1204.4 251.8 C1195.5 248.4 1184.0 245.3 1173.1 241.6 C1162.2 238.0 1149.3 234.1 1139.1 230.1 C1128.9 226.0 1121.0 221.5 1111.9 217.1 C1102.8 212.8 1093.7 207.8 1084.7 204.2 C1075.7 200.6 1068.4 197.7 1058.2 195.7 C1048.0 193.7 1035.5 192.4 1023.5 192.3 Z" fill="none" stroke="#1c1c1c" stroke-width="1"/>
<path id="tp1" d="M906.1 336.2 C992.9 294.7 1122.1 293.3 1254.8 381.1" fill="none"/>
<path id="tp2" d="M1003.7 423.6 C1054.1 400.1 1122.1 415.8 1224.1 458.6" fill="none"/>
<text font-family="'Liberation Serif',serif" font-style="italic" font-weight="bold" fill="#a99f2c" stroke="#2a2606" stroke-width=".8" paint-order="stroke" font-size="72"><textPath href="#tp1" startOffset="0"><tspan font-size="90">C</tspan>ommerci</textPath></text>
<text font-family="'Liberation Serif',serif" font-style="italic" font-weight="bold" fill="#a99f2c" stroke="#2a2606" stroke-width=".8" paint-order="stroke" font-size="68" letter-spacing="6"><textPath href="#tp2" startOffset="0"><tspan font-size="100">S</tspan>treet</textPath></text>
<polygon points="1375.9,469.5 1309.6,572.9 1315.9,566.6 1382.2,463.2" fill="#767a92" stroke="#000" stroke-width="1" stroke-linejoin="round" />
<polygon points="1309.6,572.9 1442.7,598.5 1449.0,592.2 1315.9,566.6" fill="#767a92" stroke="#000" stroke-width="1" stroke-linejoin="round" />
<polygon points="1442.7,598.5 1411.0,554.0 1417.3,547.7 1449.0,592.2" fill="#767a92" stroke="#000" stroke-width="1" stroke-linejoin="round" />
<polygon points="1411.0,554.0 1531.0,516.5 1537.3,510.2 1417.3,547.7" fill="#767a92" stroke="#000" stroke-width="1" stroke-linejoin="round" />
<polygon points="1531.0,516.5 1608.0,300.0 1614.3,293.7 1537.3,510.2" fill="#767a92" stroke="#000" stroke-width="1" stroke-linejoin="round" />
<polygon points="1608.0,300.0 1526.0,254.0 1532.3,247.7 1614.3,293.7" fill="#767a92" stroke="#000" stroke-width="1" stroke-linejoin="round" />
<polygon points="1526.0,254.0 1489.0,464.5 1495.3,458.2 1532.3,247.7" fill="#767a92" stroke="#000" stroke-width="1" stroke-linejoin="round" />
<polygon points="1489.0,464.5 1394.0,517.0 1400.3,510.7 1495.3,458.2" fill="#767a92" stroke="#000" stroke-width="1" stroke-linejoin="round" />
<polygon points="1394.0,517.0 1375.9,469.5 1382.2,463.2 1400.3,510.7" fill="#767a92" stroke="#000" stroke-width="1" stroke-linejoin="round" />
<polygon points="1375.9,469.5 1309.6,572.9 1442.7,598.5 1411.0,554.0 1531.0,516.5 1608.0,300.0 1526.0,254.0 1489.0,464.5 1394.0,517.0" fill="#abaec0" stroke="#000" stroke-width="1" stroke-linejoin="round" />
<polygon points="1374.9,479.2 1316.8,569.8 1432.7,592.1 1403.9,551.6 1527.6,513.0 1602.6,302.0 1529.3,260.9 1493.0,467.3 1391.7,523.3" fill="#9194a3" stroke="#23242c" stroke-width="0.9" stroke-linejoin="round" />
<polygon points="1594.3,462.3 1658.6,528.3 1661.2,519.3 1596.9,453.3" fill="#767a92" stroke="#000" stroke-width="1" stroke-linejoin="round" />
<polygon points="1658.6,528.3 1745.0,530.2 1747.6,521.2 1661.2,519.3" fill="#767a92" stroke="#000" stroke-width="1" stroke-linejoin="round" />
<polygon points="1745.0,530.2 1697.0,600.0 1699.6,591.0 1747.6,521.2" fill="#767a92" stroke="#000" stroke-width="1" stroke-linejoin="round" />
<polygon points="1697.0,600.0 1736.6,670.5 1739.2,661.5 1699.6,591.0" fill="#767a92" stroke="#000" stroke-width="1" stroke-linejoin="round" />
<polygon points="1736.6,670.5 1658.3,649.0 1660.9,640.0 1739.2,661.5" fill="#767a92" stroke="#000" stroke-width="1" stroke-linejoin="round" />
<polygon points="1658.3,649.0 1596.0,704.0 1598.6,695.0 1660.9,640.0" fill="#767a92" stroke="#000" stroke-width="1" stroke-linejoin="round" />
<polygon points="1596.0,704.0 1581.5,620.0 1584.1,611.0 1598.6,695.0" fill="#767a92" stroke="#000" stroke-width="1" stroke-linejoin="round" />
<polygon points="1581.5,620.0 1503.5,569.5 1506.1,560.5 1584.1,611.0" fill="#767a92" stroke="#000" stroke-width="1" stroke-linejoin="round" />
<polygon points="1503.5,569.5 1582.5,540.0 1585.1,531.0 1506.1,560.5" fill="#767a92" stroke="#000" stroke-width="1" stroke-linejoin="round" />
<polygon points="1582.5,540.0 1594.3,462.3 1596.9,453.3 1585.1,531.0" fill="#767a92" stroke="#000" stroke-width="1" stroke-linejoin="round" />
<polygon points="1594.3,462.3 1658.6,528.3 1745.0,530.2 1697.0,600.0 1736.6,670.5 1658.3,649.0 1596.0,704.0 1581.5,620.0 1503.5,569.5 1582.5,540.0" fill="#abaec0" stroke="#000" stroke-width="1" stroke-linejoin="round" />
<polygon points="1597.2,471.3 1656.8,532.5 1737.1,534.2 1692.1,599.8 1728.0,663.8 1657.2,644.3 1598.9,695.9 1585.3,617.5 1512.8,570.5 1586.3,543.1" fill="#9194a3" stroke="#23242c" stroke-width="0.9" stroke-linejoin="round" />
<g stroke="#0808f0" stroke-width="1.3" fill="#0808f0"><path d="M1127.5 652.5 V630"/><path d="M1126.9 623 L1124.2 631.4 H1129.8 Z" stroke-width=".6"/><path d="M1127.5 651.9 L1120 651.4"/><path d="M1111.8 650.3 L1116.4 649.2 L1121 649.6 V653 L1119.4 654.6 L1116 652.6 Z" stroke-width=".5"/><path d="M1124 649 L1131 656 M1131 649 L1124 656 M1123.6 652.5 H1131.4 M1127.5 648.6 V656.4" fill="none" stroke-width=".9"/></g>
<g><path d="M372.6 913.6 L379.4 906.6" stroke="#2828e0" stroke-width="4" stroke-linecap="butt"/><path d="M369.8 914.2 L352 912.4" stroke="#e00000" stroke-width="4.2"/><path d="M342.8 911.4 L350.8 907 L349.8 916 Z" fill="#e00000"/><rect x="368.9" y="896" width="4.4" height="18.6" fill="#a6f3a6"/><rect x="368.9" y="910.4" width="4.4" height="4.6" fill="#14b024"/><path d="M370.9 886.6 L366.4 895.4 H375.4 Z" fill="#6fe47a"/><ellipse cx="370.9" cy="895.6" rx="4.6" ry="1.3" fill="#12a822"/><text x="368" y="881.6" font-family="'Liberation Sans',sans-serif" font-size="8" font-weight="bold" fill="#2ee03a">Y</text><text x="382" y="901" font-family="'Liberation Sans',sans-serif" font-size="8.4" font-weight="bold" fill="#2222e0">Z</text><text x="335.8" y="910" font-family="'Liberation Sans',sans-serif" font-size="8" font-weight="bold" fill="#f04a4a">X</text></g>
<g opacity=".45"><circle cx="1570.6" cy="773.4" r="89.4" fill="none" stroke="#000" stroke-width="7.2"/><path transform="translate(1470 675) scale(0.20627)" fill-rule="evenodd" d="M335 262 C305 300 285 350 275 405 L235 500 L262 497 L238 560 C205 585 195 640 215 672 C250 695 300 700 345 690 C330 710 300 760 255 825 Q340 882 455 893 L458 850 L500 815 L498 845 L552 765 L545 810 L640 690 L660 760 L700 600 L745 680 Q742 560 700 490 L780 555 Q760 460 690 415 L640 295 L575 318 L600 335 Q500 330 400 352 L345 332 Z M430 440 L500 425 Q560 440 578 510 Q575 580 500 635 Q420 682 335 694 Q298 672 308 642 Q330 612 400 602 Q480 592 525 540 Q540 510 530 488 L518 522 Q498 558 440 578 L352 584 L470 532 L430 520 L465 490 L440 480 L470 455 Z M298 505 L330 452 L322 488 Z" fill="#000"/></g>
<text x="0" y="0" font-family="'Liberation Sans','Noto Sans CJK SC',sans-serif" font-weight="900" font-size="61" fill="#444" opacity=".92" transform="translate(1421 941) skewX(-12) scale(1.2 1)" letter-spacing="1.5">黑龙教育</text>
<text x="1418" y="972" font-family="'Liberation Sans',sans-serif" font-weight="bold" font-style="italic" font-size="20" fill="#3c3c3c" stroke="#3c3c3c" stroke-width=".9" textLength="300" lengthAdjust="spacingAndGlyphs">BLACK DRAGON EDUCATION</text>
<text x="1631" y="964" font-family="'Liberation Sans','Noto Sans CJK SC',sans-serif" font-size="19" font-weight="300" fill="#cdcdcd" opacity=".7">激活 Wind</text>
<text x="1292.6" y="934.4" font-family="'Liberation Sans','Noto Sans CJK SC',sans-serif" font-size="42" font-weight="400" fill="#1a1a1a" stroke="#1a1a1a" stroke-width=".8" textLength="404" lengthAdjust="spacing"><tspan font-weight="900">头条</tspan><tspan dx="9" font-weight="400">@黑龙工业培训</tspan></text>
<text x="1290.4" y="932.2" font-family="'Liberation Sans','Noto Sans CJK SC',sans-serif" font-size="42" font-weight="400" fill="#fff" textLength="404" lengthAdjust="spacing"><tspan font-weight="900">头条</tspan><tspan dx="9" font-weight="400">@黑龙工业培训</tspan></text>
</svg>
<div class="abs" style="left:14px;top:18px;width:174px;height:24px;box-sizing:border-box;background:#e2e2e2;border:1px solid #cfcfcf"></div>
<svg class="abs" style="left:14px;top:18px" width="174" height="24" viewBox="0 0 174 24"><path d="M64 .5 H173.5 V23.5 H64 L73 12 Z" fill="#adc5dc" stroke="#7b9fc4" stroke-width="1"/><path d="M32 .5 L41 12 L32 23.5" fill="none" stroke="#c4c4c4" stroke-width="1"/><path d="M14 9 L19 5.4 L23.6 7.4 V11 L29 13 V17.4 L24 21 L14 16.4 Z" fill="#f0cc52" stroke="#8a6a10" stroke-width=".9"/><path d="M14 9 L19 11 L23.6 7.4 M19 11 V14.4 L24 16.6 L29 13 M24 16.6 V21" fill="none" stroke="#8a6a10" stroke-width=".7"/><path d="M45 10.6 Q50 4 55 7.6 Q59 9.8 62 5.6 L60.6 13 Q57 17.6 53 15 L51.6 20.6 Z" fill="#5fa6cf" stroke="#2a6d98" stroke-width=".8"/><path d="M79 15 Q84 9 92 13 L93 17 Q90 20.6 83 20 L79 18 Z" fill="#e6e6e6" stroke="#555" stroke-width=".9"/><path d="M77 8.4 Q82 2.4 90 5.4 L92.4 9 Q85 6.4 80 11 Z" fill="#5fa6cf" stroke="#2a6d98" stroke-width=".8"/></svg>
<div class="abs" style="left:114px;top:23px;font-size:10px;line-height:14px;letter-spacing:.9px;white-space:nowrap;color:#111;font-family:'Liberation Mono','Noto Sans CJK SC',sans-serif">曲面-等距1</div>
<svg class="abs" style="left:608px;top:3px" width="370" height="28" viewBox="940 141 370 28"><g><path d="M954 160 L948.6 166" stroke="#3f93c6" stroke-width="3" stroke-linecap="round"/><circle cx="959.6" cy="152.6" r="6" fill="#e9eef2" stroke="#777" stroke-width="1.2"/><path d="M959.6 149 V156.2 M956 152.6 H963.2" stroke="#555" stroke-width=".9"/></g><g><path d="M980 160 L974.6 166" stroke="#3f93c6" stroke-width="3" stroke-linecap="round"/><rect x="979" y="146" width="13" height="12" fill="none" stroke="#444" stroke-width="1" stroke-dasharray="2.4 1.6"/><circle cx="985.6" cy="152.6" r="5.6" fill="#e9eef2" stroke="#777" stroke-width="1.2"/></g><g><path d="M1002 158 L1014 148 L1018.6 152 L1007 162.6 Z" fill="#e6e6e6" stroke="#777" stroke-width="1"/><ellipse cx="1005" cy="160" rx="3.2" ry="2.4" fill="#fafafa" stroke="#777" stroke-width=".9" transform="rotate(-40 1005 160)"/><path d="M1011 160.6 H1019 M1011 160.6 L1014.4 157.6 M1011 160.6 L1014.4 163.6" stroke="#2676a8" stroke-width="1.6" fill="none"/></g><g><path d="M1027.6 153 Q1027.6 148 1036 148 Q1044.6 148 1044.6 153 V162 H1039.6 V155 Q1039.6 153 1036 153 Q1032.6 153 1032.6 155 V163.6 H1027.6 Z" fill="#3f93c6" stroke="#1b4f74" stroke-width=".9"/><path d="M1027.6 153 Q1032 150.6 1032.6 155 M1044.6 153 Q1040 150.6 1039.6 155" stroke="#1b4f74" fill="none" stroke-width=".8"/><path d="M1032.6 155 Q1036 151.4 1039.6 155 V160 H1032.6 Z" fill="#d6d6d6" stroke="#666" stroke-width=".7"/></g><g><path d="M1053 158 L1065 148 L1069.6 152 L1058 162.6 Z" fill="#e6e6e6" stroke="#777" stroke-width="1"/><ellipse cx="1056" cy="160" rx="3.2" ry="2.4" fill="#fafafa" stroke="#777" stroke-width=".9" transform="rotate(-40 1056 160)"/><path d="M1058.4 146 L1063 146 L1059.6 150 L1062.6 150 L1054.4 157 L1057 152 L1054.4 152 Z" fill="#f39a1a" stroke="#c2600a" stroke-width=".5"/><text x="1061.6" y="165.6" font-family="'Liberation Serif',serif" font-size="11" fill="#2676a8">A</text></g><g><path d="M1081 152.6 L1086 147.6 H1098 V159.6 L1093 164.6 H1081 Z" fill="#f2f2f2" stroke="#555" stroke-width="1"/><rect x="1081" y="152.6" width="12" height="12" fill="#4d9fd0" stroke="#1b4f74" stroke-width="1"/><path d="M1093 152.6 L1098 147.6" stroke="#555" stroke-width=".9"/></g><g><path d="M1121 150 L1126.6 147.6 L1136 149 V161 L1130 164.6 L1121 162.6 Z" fill="#f4f4f4" stroke="#555" stroke-width="1"/><path d="M1121 150 L1130 151.6 V164.6 L1121 162.6 Z" fill="#6cb2dc" stroke="#1b4f74" stroke-width=".8"/><path d="M1130 151.6 L1136 149" stroke="#555" stroke-width=".8"/></g><g><path d="M1159.6 154.6 Q1168.5 146.6 1177.4 154.6 Q1168.5 162.6 1159.6 154.6 Z" fill="#d9d9d9" stroke="#777" stroke-width="1"/><circle cx="1168.5" cy="154.6" r="3.4" fill="#555"/><path d="M1168.5 146.6 V164" stroke="#444" stroke-width="1"/></g><g><circle cx="1207" cy="153.6" r="7.4" fill="#2e9c3c"/><path d="M1207 153.6 L1200 151 A7.4 7.4 0 0 1 1209 146.4 Z" fill="#2a6fc0"/><path d="M1207 153.6 L1209 146.4 A7.4 7.4 0 0 1 1214.2 155 Z" fill="#d32f2f"/><path d="M1207 153.6 L1200 151 A7.4 7.4 0 0 0 1203 159.8 Z" fill="#3a7fd0"/><path d="M1209.6 161.6 L1217 153 L1219.6 155.4 L1212.4 164 L1208.6 165 Z" fill="#e8b21c" stroke="#7a5a10" stroke-width=".7"/></g><g><circle cx="1233.4" cy="153" r="7.4" fill="#2e9c3c"/><path d="M1233.4 153 L1226.4 150.4 A7.4 7.4 0 0 1 1235.4 145.8 Z" fill="#2a6fc0"/><path d="M1233.4 153 L1235.4 145.8 A7.4 7.4 0 0 1 1240.6 154.4 Z" fill="#d32f2f"/><path d="M1233.4 153 L1240.6 154.4 A7.4 7.4 0 0 1 1236 160 Z" fill="#e8b21c"/><path d="M1225 159.6 H1243 V166 H1225 Z" fill="#222"/><path d="M1226.6 161 H1230 V163.4 H1226.6 Z M1233.4 161 H1236.6 V163.4 H1233.4 Z M1240 161 H1242.6 V163.4 H1240 Z M1230 163.4 H1233.4 V166 H1230 Z M1236.6 163.4 H1240 V166 H1236.6 Z" fill="#eee"/></g><g><rect x="1265.6" y="147" width="16.4" height="11.6" fill="#dcdcdc" stroke="#555" stroke-width="1.2"/><path d="M1273.8 158.6 V162.6 M1269 163 H1278.6" stroke="#555" stroke-width="1.4"/></g><path d="M1104.8000000000002 153.4 H1110.0 L1107.4 156.4 Z" fill="#8a8a8a"/><path d="M1144.4 153.4 H1149.6 L1147 156.4 Z" fill="#8a8a8a"/><path d="M1184.6000000000001 153.4 H1189.8 L1187.2 156.4 Z" fill="#8a8a8a"/><path d="M1250.7 153.4 H1255.8999999999999 L1253.3 156.4 Z" fill="#8a8a8a"/><path d="M1290.4 153.4 H1295.6 L1293 156.4 Z" fill="#8a8a8a"/></svg>
</div>

</body>
</html>
